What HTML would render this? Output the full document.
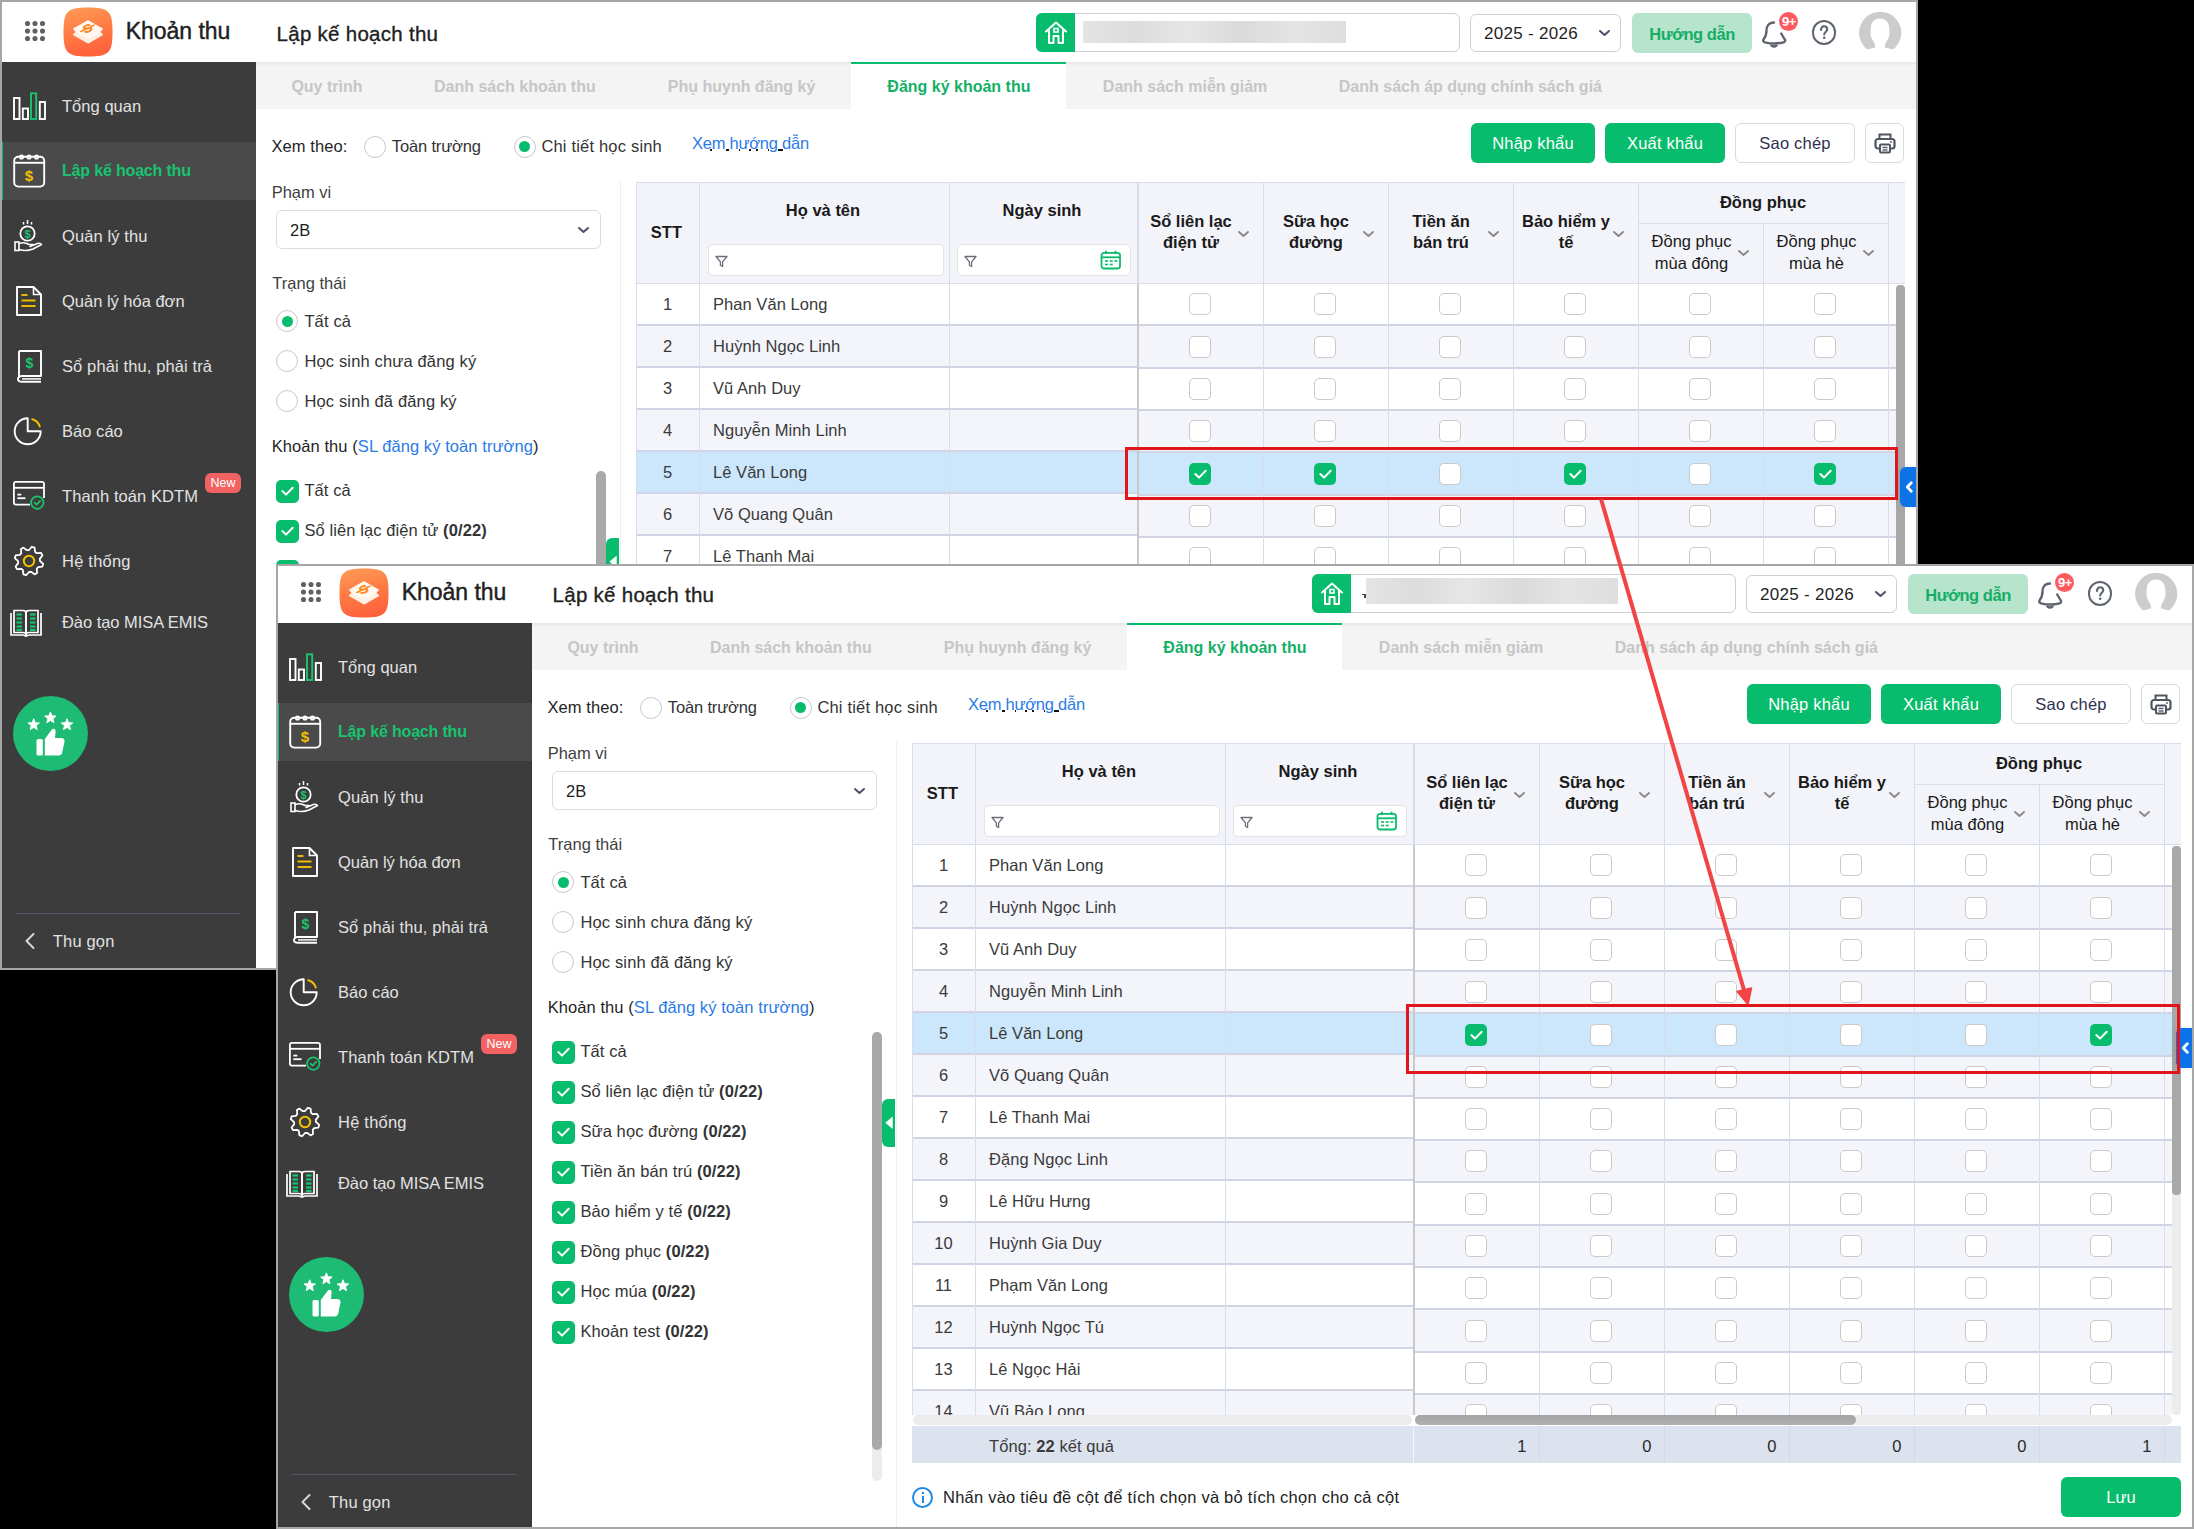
<!DOCTYPE html><html><head><meta charset="utf-8"><style>
html,body{margin:0;padding:0;background:#000;}
body{width:2194px;height:1529px;position:relative;overflow:hidden;font-family:"Liberation Sans", sans-serif;}
.shot{position:absolute;border:2px solid #a6a6a6;box-sizing:border-box;overflow:hidden;background:#fff;}
b{font-weight:700;}
</style></head><body>
<div class="shot" style="left:0;top:0;width:1918px;height:970px;"><div style="position:absolute;left:-2px;top:-2px;"><div style="position:absolute;left:0;top:0;width:1920px;height:970px;background:#fff;"><div style="position:absolute;left:0px;top:0px;width:1916px;height:62px;background:#fff;"></div><svg style="position:absolute;left:20px;top:16px;overflow:visible" width="30" height="30" viewBox="0 0 30 30"><circle cx="7.5" cy="7.5" r="2.55" fill="#606060"/><circle cx="7.5" cy="15" r="2.55" fill="#606060"/><circle cx="7.5" cy="22.5" r="2.55" fill="#606060"/><circle cx="15" cy="7.5" r="2.55" fill="#606060"/><circle cx="15" cy="15" r="2.55" fill="#606060"/><circle cx="15" cy="22.5" r="2.55" fill="#606060"/><circle cx="22.5" cy="7.5" r="2.55" fill="#606060"/><circle cx="22.5" cy="15" r="2.55" fill="#606060"/><circle cx="22.5" cy="22.5" r="2.55" fill="#606060"/></svg><svg style="position:absolute;left:63px;top:7px;overflow:visible" width="50" height="50" viewBox="0 0 50 50">
      <defs><linearGradient id="lg" x1="0" y1="0" x2="0.25" y2="1"><stop offset="0" stop-color="#ff9d55"/><stop offset="0.55" stop-color="#ff7a45"/><stop offset="1" stop-color="#ff633c"/></linearGradient></defs>
      <path d="M0.5 25 C0.5 4 4 0.5 25 0.5 C46 0.5 49.5 4 49.5 25 C49.5 46 46 49.5 25 49.5 C4 49.5 0.5 46 0.5 25 Z" fill="url(#lg)"/>
      <path d="M25 13.1 L40.2 21.7 L37.4 25.1 L40.2 27.8 L25.2 36.6 L9.8 27.8 L12.6 25.1 L9.8 21.7 Z" fill="#fff9f1"/>
      <path d="M12.6 25.1 L25.2 31.8 L37.4 25.1 L40.2 27.8 L25.2 36.6 L9.8 27.8 Z" fill="#fdeedf" opacity="0.8"/>
      <g transform="translate(24.5 21.3) rotate(-24) scale(1 0.8)">
        <line x1="-7.2" y1="0.3" x2="-3.8" y2="0.3" stroke="#ff8617" stroke-width="1.9" stroke-linecap="round"/>
        <line x1="3.8" y1="-0.3" x2="7.2" y2="-0.3" stroke="#ff8617" stroke-width="1.9" stroke-linecap="round"/>
        <text x="0" y="5" font-family="Liberation Sans" font-weight="700" font-size="13.5" fill="#ff8617" stroke="#ff8617" stroke-width="0.7" text-anchor="middle">S</text>
      </g></svg><div style="position:absolute;left:125.8px;top:19.53px;font-size:23px;line-height:23px;font-weight:400;color:#1f1f1f;white-space:nowrap;letter-spacing:-0.047px;-webkit-text-stroke:0.45px #1f1f1f;">Khoản thu</div><div style="position:absolute;left:276.6px;top:24.15px;font-size:20.5px;line-height:20.5px;font-weight:400;color:#1f1f1f;white-space:nowrap;letter-spacing:0.274px;-webkit-text-stroke:0.35px #1f1f1f;">Lập kế hoạch thu</div><div style="position:absolute;left:1036px;top:13px;width:424px;height:39px;border:1px solid #cfcfcf;border-radius:6px;box-sizing:border-box;background:#fff;"></div><div style="position:absolute;left:1036px;top:13px;width:39px;height:39px;background:#07bc6c;border-radius:6px 0 0 6px;"></div><svg style="position:absolute;left:1043px;top:19px;overflow:visible" width="26" height="26" viewBox="0 0 26 26"><path d="M3 12.5 L13 3.5 L23 12.5 M6 10 V24 H10.5 V17 H15.5 V24 H20 V10" fill="none" stroke="#fff" stroke-width="2" stroke-linejoin="round" stroke-linecap="round"/><rect x="11" y="9.5" width="4" height="3.5" fill="none" stroke="#fff" stroke-width="1.6"/></svg><div style="position:absolute;left:1083px;top:21px;width:263px;height:22px;background:linear-gradient(90deg,#e4e4e4,#dcdcdc 20%,#e6e6e6 40%,#dadada 60%,#e4e4e4 80%,#dedede);filter:blur(0.6px);"></div><div style="position:absolute;left:1470px;top:14px;width:151px;height:38px;border:1px solid #d0d0d0;border-radius:6px;box-sizing:border-box;background:#fff;"></div><div style="position:absolute;left:1484px;top:25.11px;font-size:17px;line-height:17px;font-weight:400;color:#1f1f1f;white-space:nowrap;letter-spacing:0.3px;">2025 - 2026</div><svg style="position:absolute;left:1598.5px;top:30.25px;overflow:visible" width="11" height="5.5" viewBox="0 0 11 5.5"><path d="M1 1 L5.5 5.0 L10 1" fill="none" stroke="#4f4f6b" stroke-width="2" stroke-linecap="round" stroke-linejoin="round"/></svg><div style="position:absolute;left:1632px;top:13px;width:120px;height:40px;background:#b6e4cc;border-radius:6px;"></div><div style="position:absolute;left:1632.0px;width:120px;text-align:center;top:25.53px;font-size:16.5px;line-height:16.5px;font-weight:700;color:#16ad66;white-space:nowrap;letter-spacing:-0.45px;">Hướng dẫn</div><svg style="position:absolute;left:1762px;top:20px;overflow:visible" width="26" height="28" viewBox="0 0 26 28"><path d="M12 2.5 C6.5 2.5 4.5 6.5 4.5 10.5 C4.5 14.5 3.8 16.5 1.5 19.5 C0.8 20.5 1.2 21.8 3 22.3 C9 23.8 16 23.8 21.5 22.3 C23.2 21.8 23.5 20.6 22.8 19.5 L19.2 13.5" fill="none" stroke="#5f6570" stroke-width="2.4" stroke-linecap="round" stroke-linejoin="round"/><path d="M9.5 25.5 Q12 27.5 14.5 25.5" fill="none" stroke="#5f6570" stroke-width="2.4" stroke-linecap="round"/></svg><div style="position:absolute;left:1778.8px;top:11.7px;width:19.200000000000045px;height:19.2px;background:#ff5a5f;border-radius:50%;"></div><div style="position:absolute;left:1774.0px;width:30px;text-align:center;top:14.80px;font-size:13px;line-height:13px;font-weight:700;color:#fff;white-space:nowrap;letter-spacing:-0.4px;">9+</div><div style="position:absolute;left:1811.5px;top:19.5px;width:24.799999999999955px;height:25.0px;border:2.4px solid #5f6570;border-radius:50%;box-sizing:border-box;"></div><svg style="position:absolute;left:1816px;top:24px;overflow:visible" width="16" height="16" viewBox="0 0 16 16"><path d="M5 6 C5 3.5 6.5 2.3 8 2.3 C9.8 2.3 11.2 3.6 11.2 5.4 C11.2 7.5 8.2 8 8.2 10.5" fill="none" stroke="#5d636e" stroke-width="2.1" stroke-linecap="round"/><circle cx="8.2" cy="13.8" r="1.3" fill="#5d636e"/></svg><svg style="position:absolute;left:1859px;top:11.5px;overflow:visible" width="42" height="43" viewBox="0 0 42 43"><circle cx="21.2" cy="20.8" r="21.1" fill="#cccccc"/><path d="M8 37.6 L16 35.5 C16.5 32 14.5 30 13 27 C11.3 23.5 11.2 20.5 11.8 15.5 C12.5 9.5 16 6.6 21 6.6 C26 6.6 29.5 9.5 30.2 15.5 C30.8 20.5 30.7 23.5 29 27 C27.5 30 25.5 32 26 35.5 L34 37.6 L34 44 L8 44 Z" fill="#fff"/></svg><div style="position:absolute;left:0px;top:62px;width:256px;height:906px;background:#3c3c3c;"></div><div style="position:absolute;left:0px;top:142px;width:256px;height:58px;background:#4a4a4a;"></div><div style="position:absolute;left:0px;top:142px;width:3px;height:58px;background:#07bc6c;"></div><svg style="position:absolute;left:12px;top:91px;overflow:visible" width="34" height="30" viewBox="0 0 34 30">
      <rect x="2" y="7" width="5.5" height="21" fill="none" stroke="#ffffff" stroke-width="1.9"/>
      <rect x="10.8" y="17.5" width="5.2" height="10.5" fill="none" stroke="#ffffff" stroke-width="1.9"/>
      <rect x="19" y="2.3" width="5.2" height="25.7" fill="none" stroke="#19c46e" stroke-width="1.9"/>
      <rect x="27.8" y="11" width="5.2" height="17" fill="none" stroke="#ffffff" stroke-width="1.9"/></svg><svg style="position:absolute;left:12px;top:153px;overflow:visible" width="34" height="36" viewBox="0 0 34 36">
      <rect x="2.2" y="3.8" width="30" height="29.8" rx="4" fill="none" stroke="#ffffff" stroke-width="1.9"/>
      <line x1="2.2" y1="9.8" x2="32.2" y2="9.8" stroke="#ffffff" stroke-width="1.9"/>
      <circle cx="9.5" cy="4" r="1.8" fill="none" stroke="#ffffff" stroke-width="1.5"/>
      <circle cx="17" cy="4" r="1.8" fill="none" stroke="#ffffff" stroke-width="1.5"/>
      <circle cx="24.5" cy="4" r="1.8" fill="none" stroke="#ffffff" stroke-width="1.5"/>
      <text x="17" y="27.5" font-family="Liberation Sans" font-weight="700" font-size="15" fill="#f5c000" text-anchor="middle">$</text></svg><svg style="position:absolute;left:13px;top:219px;overflow:visible" width="32" height="34" viewBox="0 0 32 34">
      <circle cx="14.5" cy="14.5" r="7.2" fill="none" stroke="#ffffff" stroke-width="1.8"/>
      <text x="14.5" y="18.8" font-family="Liberation Sans" font-weight="700" font-size="11" fill="#19c46e" text-anchor="middle">$</text>
      <line x1="14.5" y1="1" x2="14.5" y2="5" stroke="#ffffff" stroke-width="1.5"/>
      <line x1="10.5" y1="3" x2="10.5" y2="5.5" stroke="#ffffff" stroke-width="1.5"/>
      <line x1="18.5" y1="3" x2="18.5" y2="5.5" stroke="#ffffff" stroke-width="1.5"/>
      <rect x="2" y="23" width="4" height="8.5" fill="none" stroke="#ffffff" stroke-width="1.6"/>
      <path d="M6 24.5 C10 23 13 23.5 16 25.5 L20 25.5 M6 30.5 C11 32 15 32 20 30 L28.5 25.5 C27.5 24 25 24 22 25.5 L17 27.5" fill="none" stroke="#ffffff" stroke-width="1.6" stroke-linejoin="round" stroke-linecap="round"/></svg><svg style="position:absolute;left:15px;top:285px;overflow:visible" width="28" height="32" viewBox="0 0 28 32">
      <path d="M2 2 H18.5 L26 9.5 V30 H2 Z" fill="none" stroke="#ffffff" stroke-width="1.9" stroke-linejoin="round"/>
      <path d="M18.5 2 V9.5 H26" fill="none" stroke="#ffffff" stroke-width="1.6"/>
      <line x1="6.5" y1="10" x2="12.5" y2="10" stroke="#f5c000" stroke-width="1.9"/>
      <line x1="6.5" y1="15.5" x2="20.5" y2="15.5" stroke="#f5c000" stroke-width="1.9"/>
      <line x1="6.5" y1="21" x2="20.5" y2="21" stroke="#f5c000" stroke-width="1.9"/></svg><svg style="position:absolute;left:15px;top:349px;overflow:visible" width="28" height="35" viewBox="0 0 28 35">
      <path d="M4 2 H26 V27 H7 C4.5 27 3 28.5 3 30 C3 31.8 4.5 32.8 7 32.8 H26" fill="none" stroke="#ffffff" stroke-width="1.9" stroke-linejoin="round"/>
      <path d="M4 2 V29" fill="none" stroke="#ffffff" stroke-width="1.9"/>
      <line x1="7" y1="29.9" x2="26" y2="29.9" stroke="#ffffff" stroke-width="1.5"/>
      <text x="14.5" y="18.5" font-family="Liberation Sans" font-weight="700" font-size="14" fill="#19c46e" text-anchor="middle">$</text></svg><svg style="position:absolute;left:14px;top:416px;overflow:visible" width="30" height="30" viewBox="0 0 30 30">
      <path d="M13.7 2.3 A13 13 0 1 0 26.7 15.3 H13.7 Z" fill="none" stroke="#ffffff" stroke-width="1.9" stroke-linejoin="round"/>
      <path d="M17.5 3 A11.5 11.5 0 0 1 26 11.3" fill="none" stroke="#f5c000" stroke-width="1.9"/></svg><svg style="position:absolute;left:13px;top:481px;overflow:visible" width="33" height="30" viewBox="0 0 33 30">
      <path d="M31 17 V3 C31 1.6 30.2 0.9 28.8 0.9 H3 C1.6 0.9 0.9 1.6 0.9 3 V21.5 C0.9 22.9 1.6 23.6 3 23.6 H17" fill="none" stroke="#ffffff" stroke-width="1.8"/>
      <line x1="0.9" y1="6.8" x2="31" y2="6.8" stroke="#ffffff" stroke-width="1.8"/>
      <line x1="4.3" y1="13.6" x2="8.3" y2="13.6" stroke="#ffffff" stroke-width="1.8"/>
      <line x1="4.3" y1="17.2" x2="12.5" y2="17.2" stroke="#ffffff" stroke-width="1.8"/>
      <circle cx="24.3" cy="21.6" r="6.2" fill="#3c3c3c" stroke="#19c46e" stroke-width="1.8"/>
      <path d="M21.6 21.6 L23.6 23.6 L27.1 19.9" fill="none" stroke="#19c46e" stroke-width="1.7" stroke-linecap="round" stroke-linejoin="round"/></svg><svg style="position:absolute;left:14px;top:546px;overflow:visible" width="30" height="30" viewBox="0 0 30 30">
      <path d="M15.00 0.50 L17.83 0.78 L19.21 4.84 L21.11 5.85 L25.25 4.75 L27.06 6.94 L25.16 10.79 L25.79 12.85 L29.50 15.00 L29.22 17.83 L25.16 19.21 L24.15 21.11 L25.25 25.25 L23.06 27.06 L19.21 25.16 L17.15 25.79 L15.00 29.50 L12.17 29.22 L10.79 25.16 L8.89 24.15 L4.75 25.25 L2.94 23.06 L4.84 19.21 L4.21 17.15 L0.50 15.00 L0.78 12.17 L4.84 10.79 L5.85 8.89 L4.75 4.75 L6.94 2.94 L10.79 4.84 L12.85 4.21 Z" fill="none" stroke="#ffffff" stroke-width="1.8" stroke-linejoin="round" transform="rotate(11.25 15 15)"/>
      <circle cx="15" cy="15" r="5.2" fill="none" stroke="#f5c000" stroke-width="2"/></svg><svg style="position:absolute;left:9px;top:609px;overflow:visible" width="34" height="29" viewBox="0 0 34 29">
      <path d="M2 4 V26 H14 C15 26 16 27 17 27 C18 27 19 26 20 26 H32 V4" fill="none" stroke="#ffffff" stroke-width="1.7"/>
      <path d="M5 1.5 H14 C15.5 1.5 17 2.5 17 4 V25 C16 23.5 15 23.5 14 23.5 H5 Z" fill="none" stroke="#ffffff" stroke-width="1.7"/>
      <path d="M29 1.5 H20 C18.5 1.5 17 2.5 17 4 V25 C18 23.5 19 23.5 20 23.5 H29 Z" fill="none" stroke="#ffffff" stroke-width="1.7"/>
      <g stroke="#19c46e" stroke-width="2.2">
       <line x1="7.5" y1="5.5" x2="13" y2="5.5"/><line x1="7.5" y1="9.5" x2="13" y2="9.5"/><line x1="7.5" y1="13.5" x2="13" y2="13.5"/><line x1="7.5" y1="17.5" x2="13" y2="17.5"/><line x1="7.5" y1="21" x2="13" y2="21"/>
       <line x1="21" y1="5.5" x2="26.5" y2="5.5"/><line x1="21" y1="9.5" x2="26.5" y2="9.5"/><line x1="21" y1="13.5" x2="26.5" y2="13.5"/><line x1="21" y1="17.5" x2="26.5" y2="17.5"/><line x1="21" y1="21" x2="26.5" y2="21"/>
      </g></svg><div style="position:absolute;left:62px;top:98.03px;font-size:16.5px;line-height:16.5px;font-weight:400;color:#e2e2e2;white-space:nowrap;letter-spacing:0.037px;">Tổng quan</div><div style="position:absolute;left:62px;top:163.46px;font-size:16px;line-height:16px;font-weight:700;color:#17c46f;white-space:nowrap;letter-spacing:-0.172px;">Lập kế hoạch thu</div><div style="position:absolute;left:62px;top:228.03px;font-size:16.5px;line-height:16.5px;font-weight:400;color:#e2e2e2;white-space:nowrap;letter-spacing:0.111px;">Quản lý thu</div><div style="position:absolute;left:62px;top:293.03px;font-size:16.5px;line-height:16.5px;font-weight:400;color:#e2e2e2;white-space:nowrap;letter-spacing:-0.011px;">Quản lý hóa đơn</div><div style="position:absolute;left:62px;top:358.03px;font-size:16.5px;line-height:16.5px;font-weight:400;color:#e2e2e2;white-space:nowrap;letter-spacing:0.116px;">Sổ phải thu, phải trả</div><div style="position:absolute;left:62px;top:423.03px;font-size:16.5px;line-height:16.5px;font-weight:400;color:#e2e2e2;white-space:nowrap;letter-spacing:0.042px;">Báo cáo</div><div style="position:absolute;left:62px;top:488.03px;font-size:16.5px;line-height:16.5px;font-weight:400;color:#e2e2e2;white-space:nowrap;letter-spacing:0.085px;">Thanh toán KDTM</div><div style="position:absolute;left:62px;top:553.03px;font-size:16.5px;line-height:16.5px;font-weight:400;color:#e2e2e2;white-space:nowrap;letter-spacing:0.219px;">Hệ thống</div><div style="position:absolute;left:62px;top:614.03px;font-size:16.5px;line-height:16.5px;font-weight:400;color:#e2e2e2;white-space:nowrap;letter-spacing:-0.046px;">Đào tạo MISA EMIS</div><div style="position:absolute;left:205px;top:473px;width:36px;height:20px;background:#f26262;border-radius:6px;"></div><div style="position:absolute;left:205.0px;width:36px;text-align:center;top:477.42px;font-size:12.5px;line-height:12.5px;font-weight:400;color:#fff;white-space:nowrap;letter-spacing:0px;">New</div><div style="position:absolute;left:13px;top:696px;width:75px;height:75px;background:#1dbb73;border-radius:50%;"></div><svg style="position:absolute;left:13.5px;top:696.5px;overflow:visible" width="74" height="74" viewBox="0 0 74 74"><polygon points="19.70,21.80 21.23,25.70 25.41,25.95 22.17,28.60 23.23,32.65 19.70,30.40 16.17,32.65 17.23,28.60 13.99,25.95 18.17,25.70" fill="#fff" stroke="#fff" stroke-width="1" stroke-linejoin="round"/><polygon points="36.40,14.90 37.93,18.80 42.11,19.05 38.87,21.70 39.93,25.75 36.40,23.50 32.87,25.75 33.93,21.70 30.69,19.05 34.87,18.80" fill="#fff" stroke="#fff" stroke-width="1" stroke-linejoin="round"/><polygon points="53.00,21.80 54.53,25.70 58.71,25.95 55.47,28.60 56.53,32.65 53.00,30.40 49.47,32.65 50.53,28.60 47.29,25.95 51.47,25.70" fill="#fff" stroke="#fff" stroke-width="1" stroke-linejoin="round"/><rect x="22.5" y="42" width="6.3" height="16.5" rx="1.5" fill="#fff"/><path d="M30.8 42 L37.5 33 C38.8 31 41.8 31.5 41.6 34.5 L41 41 H47.5 C49.6 41 51 42.8 50.5 44.8 L48.2 55.5 C47.8 57.4 46.5 58.5 44.6 58.5 H30.8 Z" fill="#fff"/></svg><div style="position:absolute;left:14.7px;top:913px;width:226.8px;height:1px;background:#4d5566;"></div><svg style="position:absolute;left:24px;top:932px;overflow:visible" width="12" height="18" viewBox="0 0 12 18"><path d="M9.5 2 L2.5 9 L9.5 16" fill="none" stroke="#d8d8d8" stroke-width="2" stroke-linecap="round" stroke-linejoin="round"/></svg><div style="position:absolute;left:52.8px;top:932.73px;font-size:16.5px;line-height:16.5px;font-weight:400;color:#e2e2e2;white-space:nowrap;letter-spacing:0.176px;">Thu gọn</div><div style="position:absolute;left:256px;top:62px;width:1660px;height:47px;background:#f4f4f4;"></div><div style="position:absolute;left:256px;top:62px;width:1660px;height:4px;background:linear-gradient(#e6e6e6,#f4f4f4);"></div><div style="position:absolute;left:851px;top:62px;width:215px;height:47px;background:#fff;border-top:2px solid #07bc6c;box-sizing:border-box;"></div><div style="position:absolute;left:126.94999999999999px;width:400px;text-align:center;top:78.66px;font-size:16px;line-height:16px;font-weight:700;color:#c6c6c6;white-space:nowrap;letter-spacing:0px;">Quy trình</div><div style="position:absolute;left:314.85px;width:400px;text-align:center;top:78.66px;font-size:16px;line-height:16px;font-weight:700;color:#c6c6c6;white-space:nowrap;letter-spacing:0px;">Danh sách khoản thu</div><div style="position:absolute;left:541.55px;width:400px;text-align:center;top:78.66px;font-size:16px;line-height:16px;font-weight:700;color:#c6c6c6;white-space:nowrap;letter-spacing:0px;">Phụ huynh đăng ký</div><div style="position:absolute;left:758.9px;width:400px;text-align:center;top:78.66px;font-size:16px;line-height:16px;font-weight:700;color:#14b066;white-space:nowrap;letter-spacing:0px;">Đăng ký khoản thu</div><div style="position:absolute;left:985.0999999999999px;width:400px;text-align:center;top:78.66px;font-size:16px;line-height:16px;font-weight:700;color:#c6c6c6;white-space:nowrap;letter-spacing:0px;">Danh sách miễn giảm</div><div style="position:absolute;left:1270.4px;width:400px;text-align:center;top:78.66px;font-size:16px;line-height:16px;font-weight:700;color:#c6c6c6;white-space:nowrap;letter-spacing:0px;">Danh sách áp dụng chính sách giá</div><div style="position:absolute;left:271.4px;top:138.03px;font-size:16.5px;line-height:16.5px;font-weight:400;color:#1f1f1f;white-space:nowrap;letter-spacing:0.098px;">Xem theo:</div><div style="position:absolute;left:363.5px;top:135.5px;width:22.0px;height:22.0px;border:1.5px solid #c8c8c8;border-radius:50%;box-sizing:border-box;background:#fff;"></div><div style="position:absolute;left:391.8px;top:138.03px;font-size:16.5px;line-height:16.5px;font-weight:400;color:#333;white-space:nowrap;letter-spacing:-0.147px;">Toàn trường</div><div style="position:absolute;left:513.5px;top:135.5px;width:22.0px;height:22.0px;border:1.5px solid #c8c8c8;border-radius:50%;box-sizing:border-box;background:#fff;"></div><div style="position:absolute;left:519.0px;top:141.0px;width:11.0px;height:11.0px;background:#07bc6c;border-radius:50%;"></div><div style="position:absolute;left:541.4px;top:138.03px;font-size:16.5px;line-height:16.5px;font-weight:400;color:#333;white-space:nowrap;letter-spacing:0.187px;">Chi tiết học sinh</div><div style="position:absolute;left:692px;top:134.73px;font-size:16.5px;line-height:16.5px;font-weight:400;color:#2b7be6;white-space:nowrap;letter-spacing:-0.244px;">Xem hướng dẫn</div><div style="position:absolute;left:710px;top:149.2px;width:1.5px;height:1.6000000000000227px;background:#111;"></div><div style="position:absolute;left:725.9px;top:149.2px;width:3.2000000000000455px;height:1.6000000000000227px;background:#111;"></div><div style="position:absolute;left:738.7px;top:149.2px;width:1.5px;height:1.6000000000000227px;background:#111;"></div><div style="position:absolute;left:749px;top:149.2px;width:1.5px;height:1.6000000000000227px;background:#111;"></div><div style="position:absolute;left:755.8px;top:149.2px;width:2.2000000000000455px;height:1.6000000000000227px;background:#111;"></div><div style="position:absolute;left:767.7px;top:149.2px;width:1.5px;height:1.6000000000000227px;background:#111;"></div><div style="position:absolute;left:778px;top:149.2px;width:5px;height:1.6000000000000227px;background:#111;"></div><div style="position:absolute;left:1471px;top:123px;width:123.70000000000005px;height:39.69999999999999px;background:#07bc6c;border-radius:6px;"></div><div style="position:absolute;left:1471.0px;width:124px;text-align:center;top:135.03px;font-size:16.5px;line-height:16.5px;font-weight:400;color:#fff;white-space:nowrap;letter-spacing:0.2px;">Nhập khẩu</div><div style="position:absolute;left:1605px;top:123px;width:119.70000000000005px;height:39.69999999999999px;background:#07bc6c;border-radius:6px;"></div><div style="position:absolute;left:1603.0px;width:124px;text-align:center;top:135.03px;font-size:16.5px;line-height:16.5px;font-weight:400;color:#fff;white-space:nowrap;letter-spacing:0.2px;">Xuất khẩu</div><div style="position:absolute;left:1735.2px;top:123px;width:119.39999999999986px;height:39.69999999999999px;background:#fff;border:1px solid #dadada;border-radius:6px;box-sizing:border-box;"></div><div style="position:absolute;left:1733.0px;width:124px;text-align:center;top:135.03px;font-size:16.5px;line-height:16.5px;font-weight:400;color:#2f2f4f;white-space:nowrap;letter-spacing:0.2px;">Sao chép</div><div style="position:absolute;left:1864.8px;top:123px;width:39.700000000000045px;height:39.69999999999999px;background:#fff;border:1px solid #dadada;border-radius:6px;box-sizing:border-box;"></div><svg style="position:absolute;left:1873px;top:131px;overflow:visible" width="24" height="24" viewBox="0 0 24 24"><path d="M6.5 8 V3.5 H17.5 V8" fill="none" stroke="#505562" stroke-width="2"/><rect x="2.5" y="8" width="19" height="9.5" rx="2.5" fill="none" stroke="#505562" stroke-width="2.2"/><rect x="7" y="13.5" width="10" height="8" rx="1" fill="#fff" stroke="#505562" stroke-width="2"/><line x1="9.5" y1="16.5" x2="14.5" y2="16.5" stroke="#505562" stroke-width="1.4"/><line x1="9.5" y1="19" x2="14.5" y2="19" stroke="#505562" stroke-width="1.4"/><circle cx="18" cy="11" r="0.9" fill="#505562"/></svg><div style="position:absolute;left:271.7px;top:184.03px;font-size:16.5px;line-height:16.5px;font-weight:400;color:#3f3f3f;white-space:nowrap;letter-spacing:-0.035px;">Phạm vi</div><div style="position:absolute;left:276.4px;top:210px;width:324.4px;height:38.5px;background:#fff;border:1px solid #dcdcdc;border-radius:6px;box-sizing:border-box;"></div><div style="position:absolute;left:290px;top:221.53px;font-size:16.5px;line-height:16.5px;font-weight:400;color:#1f1f1f;white-space:nowrap;letter-spacing:0px;">2B</div><svg style="position:absolute;left:577.5px;top:226.75px;overflow:visible" width="11" height="5.5" viewBox="0 0 11 5.5"><path d="M1 1 L5.5 5.0 L10 1" fill="none" stroke="#4f4f6b" stroke-width="2" stroke-linecap="round" stroke-linejoin="round"/></svg><div style="position:absolute;left:272.2px;top:275.03px;font-size:16.5px;line-height:16.5px;font-weight:400;color:#3f3f3f;white-space:nowrap;letter-spacing:0.035px;">Trạng thái</div><div style="position:absolute;left:276.4px;top:310.2px;width:22.0px;height:22.0px;border:1.5px solid #c8c8c8;border-radius:50%;box-sizing:border-box;background:#fff;"></div><div style="position:absolute;left:281.9px;top:315.7px;width:11.0px;height:11.0px;background:#07bc6c;border-radius:50%;"></div><div style="position:absolute;left:304.4px;top:313.23px;font-size:16.5px;line-height:16.5px;font-weight:400;color:#333;white-space:nowrap;letter-spacing:0.15px;">Tất cả</div><div style="position:absolute;left:276.4px;top:350.2px;width:22.0px;height:22.0px;border:1.5px solid #c8c8c8;border-radius:50%;box-sizing:border-box;background:#fff;"></div><div style="position:absolute;left:304.4px;top:353.23px;font-size:16.5px;line-height:16.5px;font-weight:400;color:#333;white-space:nowrap;letter-spacing:0.15px;">Học sinh chưa đăng ký</div><div style="position:absolute;left:276.4px;top:390.2px;width:22.0px;height:22.0px;border:1.5px solid #c8c8c8;border-radius:50%;box-sizing:border-box;background:#fff;"></div><div style="position:absolute;left:304.4px;top:393.23px;font-size:16.5px;line-height:16.5px;font-weight:400;color:#333;white-space:nowrap;letter-spacing:0.15px;">Học sinh đã đăng ký</div><div style="position:absolute;left:271.7px;top:438.03px;font-size:16.5px;line-height:16.5px;font-weight:400;color:#1f1f1f;white-space:nowrap;letter-spacing:0.074px;">Khoản thu (<span style="color:#2b7be6">SL đăng ký toàn trường</span>)</div><div style="position:absolute;left:276.0px;top:480.0px;width:23.0px;height:23.0px;background:#07bc6c;border-radius:5px;"></div><svg style="position:absolute;left:276.0px;top:480.0px;overflow:visible" width="23" height="23" viewBox="0 0 23 23"><path d="M6.3 11.1 L10 14.6 L16.7 7.8" fill="none" stroke="#fff" stroke-width="2" stroke-linecap="round" stroke-linejoin="round"/></svg><div style="position:absolute;left:304.4px;top:482.13px;font-size:16.5px;line-height:16.5px;font-weight:400;color:#333;white-space:nowrap;letter-spacing:0.1px;">Tất cả</div><div style="position:absolute;left:276.0px;top:520.0px;width:23.0px;height:23.0px;background:#07bc6c;border-radius:5px;"></div><svg style="position:absolute;left:276.0px;top:520.0px;overflow:visible" width="23" height="23" viewBox="0 0 23 23"><path d="M6.3 11.1 L10 14.6 L16.7 7.8" fill="none" stroke="#fff" stroke-width="2" stroke-linecap="round" stroke-linejoin="round"/></svg><div style="position:absolute;left:304.4px;top:522.13px;font-size:16.5px;line-height:16.5px;font-weight:400;color:#333;white-space:nowrap;letter-spacing:0.1px;">Sổ liên lạc điện tử <b>(0/22)</b></div><div style="position:absolute;left:276.0px;top:560.0px;width:23.0px;height:23.0px;background:#07bc6c;border-radius:5px;"></div><svg style="position:absolute;left:276.0px;top:560.0px;overflow:visible" width="23" height="23" viewBox="0 0 23 23"><path d="M6.3 11.1 L10 14.6 L16.7 7.8" fill="none" stroke="#fff" stroke-width="2" stroke-linecap="round" stroke-linejoin="round"/></svg><div style="position:absolute;left:304.4px;top:562.13px;font-size:16.5px;line-height:16.5px;font-weight:400;color:#333;white-space:nowrap;letter-spacing:0.1px;">Sữa học đường <b>(0/22)</b></div><div style="position:absolute;left:276.0px;top:600.0px;width:23.0px;height:23.0px;background:#07bc6c;border-radius:5px;"></div><svg style="position:absolute;left:276.0px;top:600.0px;overflow:visible" width="23" height="23" viewBox="0 0 23 23"><path d="M6.3 11.1 L10 14.6 L16.7 7.8" fill="none" stroke="#fff" stroke-width="2" stroke-linecap="round" stroke-linejoin="round"/></svg><div style="position:absolute;left:304.4px;top:602.13px;font-size:16.5px;line-height:16.5px;font-weight:400;color:#333;white-space:nowrap;letter-spacing:0.1px;">Tiền ăn bán trú <b>(0/22)</b></div><div style="position:absolute;left:276.0px;top:640.0px;width:23.0px;height:23.0px;background:#07bc6c;border-radius:5px;"></div><svg style="position:absolute;left:276.0px;top:640.0px;overflow:visible" width="23" height="23" viewBox="0 0 23 23"><path d="M6.3 11.1 L10 14.6 L16.7 7.8" fill="none" stroke="#fff" stroke-width="2" stroke-linecap="round" stroke-linejoin="round"/></svg><div style="position:absolute;left:304.4px;top:642.13px;font-size:16.5px;line-height:16.5px;font-weight:400;color:#333;white-space:nowrap;letter-spacing:0.1px;">Bảo hiểm y tế <b>(0/22)</b></div><div style="position:absolute;left:276.0px;top:680.0px;width:23.0px;height:23.0px;background:#07bc6c;border-radius:5px;"></div><svg style="position:absolute;left:276.0px;top:680.0px;overflow:visible" width="23" height="23" viewBox="0 0 23 23"><path d="M6.3 11.1 L10 14.6 L16.7 7.8" fill="none" stroke="#fff" stroke-width="2" stroke-linecap="round" stroke-linejoin="round"/></svg><div style="position:absolute;left:304.4px;top:682.13px;font-size:16.5px;line-height:16.5px;font-weight:400;color:#333;white-space:nowrap;letter-spacing:0.1px;">Đồng phục <b>(0/22)</b></div><div style="position:absolute;left:276.0px;top:720.0px;width:23.0px;height:23.0px;background:#07bc6c;border-radius:5px;"></div><svg style="position:absolute;left:276.0px;top:720.0px;overflow:visible" width="23" height="23" viewBox="0 0 23 23"><path d="M6.3 11.1 L10 14.6 L16.7 7.8" fill="none" stroke="#fff" stroke-width="2" stroke-linecap="round" stroke-linejoin="round"/></svg><div style="position:absolute;left:304.4px;top:722.13px;font-size:16.5px;line-height:16.5px;font-weight:400;color:#333;white-space:nowrap;letter-spacing:0.1px;">Học múa <b>(0/22)</b></div><div style="position:absolute;left:276.0px;top:760.0px;width:23.0px;height:23.0px;background:#07bc6c;border-radius:5px;"></div><svg style="position:absolute;left:276.0px;top:760.0px;overflow:visible" width="23" height="23" viewBox="0 0 23 23"><path d="M6.3 11.1 L10 14.6 L16.7 7.8" fill="none" stroke="#fff" stroke-width="2" stroke-linecap="round" stroke-linejoin="round"/></svg><div style="position:absolute;left:304.4px;top:762.13px;font-size:16.5px;line-height:16.5px;font-weight:400;color:#333;white-space:nowrap;letter-spacing:0.1px;">Khoản test <b>(0/22)</b></div><div style="position:absolute;left:596px;top:470.5px;width:10px;height:449.5px;background:#ececec;border-radius:5px;"></div><div style="position:absolute;left:596px;top:470.5px;width:10px;height:418.20000000000005px;background:#a9a9a9;border-radius:5px;"></div><div style="position:absolute;left:606px;top:538px;width:13px;height:48px;background:#07bc6c;border-radius:6px 0 0 6px;"></div><svg style="position:absolute;left:606px;top:538px;overflow:visible" width="14" height="48" viewBox="0 0 14 48"><path d="M10.7 17.6 L3.3 23.8 L10.7 30 Z" fill="#fff"/></svg><div style="position:absolute;left:620px;top:181px;width:1px;height:787px;background:#eceef4;"></div><div style="position:absolute;left:0;top:0;width:1916px;height:854px;overflow:hidden"><div style="position:absolute;left:636.4px;top:283px;width:500.6px;height:43px;background:#ffffff;"></div><div style="position:absolute;left:636.4px;top:325px;width:500.6px;height:43px;background:#f4f5fa;"></div><div style="position:absolute;left:636.4px;top:367px;width:500.6px;height:43px;background:#ffffff;"></div><div style="position:absolute;left:636.4px;top:409px;width:500.6px;height:43px;background:#f4f5fa;"></div><div style="position:absolute;left:636.4px;top:451px;width:500.6px;height:43px;background:#cce7fb;"></div><div style="position:absolute;left:636.4px;top:493px;width:500.6px;height:43px;background:#f4f5fa;"></div><div style="position:absolute;left:636.4px;top:535px;width:500.6px;height:43px;background:#ffffff;"></div><div style="position:absolute;left:636.4px;top:577px;width:500.6px;height:43px;background:#f4f5fa;"></div><div style="position:absolute;left:636.4px;top:619px;width:500.6px;height:43px;background:#ffffff;"></div><div style="position:absolute;left:636.4px;top:661px;width:500.6px;height:43px;background:#f4f5fa;"></div><div style="position:absolute;left:636.4px;top:703px;width:500.6px;height:43px;background:#ffffff;"></div><div style="position:absolute;left:636.4px;top:745px;width:500.6px;height:43px;background:#f4f5fa;"></div><div style="position:absolute;left:636.4px;top:787px;width:500.6px;height:43px;background:#ffffff;"></div><div style="position:absolute;left:636.4px;top:829px;width:500.6px;height:43px;background:#f4f5fa;"></div><div style="position:absolute;left:1139px;top:283px;width:757px;height:43px;background:#ffffff;"></div><div style="position:absolute;left:1139px;top:325px;width:757px;height:44px;background:#f4f5fa;"></div><div style="position:absolute;left:1139px;top:368px;width:757px;height:43px;background:#ffffff;"></div><div style="position:absolute;left:1139px;top:410px;width:757px;height:43px;background:#f4f5fa;"></div><div style="position:absolute;left:1139px;top:452px;width:757px;height:44px;background:#cce7fb;"></div><div style="position:absolute;left:1139px;top:495px;width:757px;height:43px;background:#f4f5fa;"></div><div style="position:absolute;left:1139px;top:537px;width:757px;height:43px;background:#ffffff;"></div><div style="position:absolute;left:1139px;top:579px;width:757px;height:43px;background:#f4f5fa;"></div><div style="position:absolute;left:1139px;top:621px;width:757px;height:44px;background:#ffffff;"></div><div style="position:absolute;left:1139px;top:664px;width:757px;height:43px;background:#f4f5fa;"></div><div style="position:absolute;left:1139px;top:706px;width:757px;height:43px;background:#ffffff;"></div><div style="position:absolute;left:1139px;top:748px;width:757px;height:44px;background:#f4f5fa;"></div><div style="position:absolute;left:1139px;top:791px;width:757px;height:43px;background:#ffffff;"></div><div style="position:absolute;left:1139px;top:833px;width:757px;height:43px;background:#f4f5fa;"></div><div style="position:absolute;left:636.4px;top:324px;width:500.6px;height:2px;background:#d0d4e4;"></div><div style="position:absolute;left:637.5px;width:60px;text-align:center;top:295.53px;font-size:16.5px;line-height:16.5px;font-weight:400;color:#3a3a3a;white-space:nowrap;letter-spacing:0px;">1</div><div style="position:absolute;left:713px;top:295.53px;font-size:16.5px;line-height:16.5px;font-weight:400;color:#3a3a3a;white-space:nowrap;letter-spacing:0.05px;">Phan Văn Long</div><div style="position:absolute;left:636.4px;top:366px;width:500.6px;height:2px;background:#d0d4e4;"></div><div style="position:absolute;left:637.5px;width:60px;text-align:center;top:337.53px;font-size:16.5px;line-height:16.5px;font-weight:400;color:#3a3a3a;white-space:nowrap;letter-spacing:0px;">2</div><div style="position:absolute;left:713px;top:337.53px;font-size:16.5px;line-height:16.5px;font-weight:400;color:#3a3a3a;white-space:nowrap;letter-spacing:0.05px;">Huỳnh Ngọc Linh</div><div style="position:absolute;left:636.4px;top:408px;width:500.6px;height:2px;background:#d0d4e4;"></div><div style="position:absolute;left:637.5px;width:60px;text-align:center;top:379.53px;font-size:16.5px;line-height:16.5px;font-weight:400;color:#3a3a3a;white-space:nowrap;letter-spacing:0px;">3</div><div style="position:absolute;left:713px;top:379.53px;font-size:16.5px;line-height:16.5px;font-weight:400;color:#3a3a3a;white-space:nowrap;letter-spacing:0.05px;">Vũ Anh Duy</div><div style="position:absolute;left:636.4px;top:450px;width:500.6px;height:2px;background:#d0d4e4;"></div><div style="position:absolute;left:637.5px;width:60px;text-align:center;top:421.53px;font-size:16.5px;line-height:16.5px;font-weight:400;color:#3a3a3a;white-space:nowrap;letter-spacing:0px;">4</div><div style="position:absolute;left:713px;top:421.53px;font-size:16.5px;line-height:16.5px;font-weight:400;color:#3a3a3a;white-space:nowrap;letter-spacing:0.05px;">Nguyễn Minh Linh</div><div style="position:absolute;left:636.4px;top:492px;width:500.6px;height:2px;background:#d0d4e4;"></div><div style="position:absolute;left:637.5px;width:60px;text-align:center;top:463.53px;font-size:16.5px;line-height:16.5px;font-weight:400;color:#3a3a3a;white-space:nowrap;letter-spacing:0px;">5</div><div style="position:absolute;left:713px;top:463.53px;font-size:16.5px;line-height:16.5px;font-weight:400;color:#3a3a3a;white-space:nowrap;letter-spacing:0.05px;">Lê Văn Long</div><div style="position:absolute;left:636.4px;top:534px;width:500.6px;height:2px;background:#d0d4e4;"></div><div style="position:absolute;left:637.5px;width:60px;text-align:center;top:505.53px;font-size:16.5px;line-height:16.5px;font-weight:400;color:#3a3a3a;white-space:nowrap;letter-spacing:0px;">6</div><div style="position:absolute;left:713px;top:505.53px;font-size:16.5px;line-height:16.5px;font-weight:400;color:#3a3a3a;white-space:nowrap;letter-spacing:0.05px;">Võ Quang Quân</div><div style="position:absolute;left:636.4px;top:576px;width:500.6px;height:2px;background:#d0d4e4;"></div><div style="position:absolute;left:637.5px;width:60px;text-align:center;top:547.53px;font-size:16.5px;line-height:16.5px;font-weight:400;color:#3a3a3a;white-space:nowrap;letter-spacing:0px;">7</div><div style="position:absolute;left:713px;top:547.53px;font-size:16.5px;line-height:16.5px;font-weight:400;color:#3a3a3a;white-space:nowrap;letter-spacing:0.05px;">Lê Thanh Mai</div><div style="position:absolute;left:636.4px;top:618px;width:500.6px;height:2px;background:#d0d4e4;"></div><div style="position:absolute;left:637.5px;width:60px;text-align:center;top:589.53px;font-size:16.5px;line-height:16.5px;font-weight:400;color:#3a3a3a;white-space:nowrap;letter-spacing:0px;">8</div><div style="position:absolute;left:713px;top:589.53px;font-size:16.5px;line-height:16.5px;font-weight:400;color:#3a3a3a;white-space:nowrap;letter-spacing:0.05px;">Đặng Ngọc Linh</div><div style="position:absolute;left:636.4px;top:660px;width:500.6px;height:2px;background:#d0d4e4;"></div><div style="position:absolute;left:637.5px;width:60px;text-align:center;top:631.53px;font-size:16.5px;line-height:16.5px;font-weight:400;color:#3a3a3a;white-space:nowrap;letter-spacing:0px;">9</div><div style="position:absolute;left:713px;top:631.53px;font-size:16.5px;line-height:16.5px;font-weight:400;color:#3a3a3a;white-space:nowrap;letter-spacing:0.05px;">Lê Hữu Hưng</div><div style="position:absolute;left:636.4px;top:702px;width:500.6px;height:2px;background:#d0d4e4;"></div><div style="position:absolute;left:637.5px;width:60px;text-align:center;top:673.53px;font-size:16.5px;line-height:16.5px;font-weight:400;color:#3a3a3a;white-space:nowrap;letter-spacing:0px;">10</div><div style="position:absolute;left:713px;top:673.53px;font-size:16.5px;line-height:16.5px;font-weight:400;color:#3a3a3a;white-space:nowrap;letter-spacing:0.05px;">Huỳnh Gia Duy</div><div style="position:absolute;left:636.4px;top:744px;width:500.6px;height:2px;background:#d0d4e4;"></div><div style="position:absolute;left:637.5px;width:60px;text-align:center;top:715.53px;font-size:16.5px;line-height:16.5px;font-weight:400;color:#3a3a3a;white-space:nowrap;letter-spacing:0px;">11</div><div style="position:absolute;left:713px;top:715.53px;font-size:16.5px;line-height:16.5px;font-weight:400;color:#3a3a3a;white-space:nowrap;letter-spacing:0.05px;">Phạm Văn Long</div><div style="position:absolute;left:636.4px;top:786px;width:500.6px;height:2px;background:#d0d4e4;"></div><div style="position:absolute;left:637.5px;width:60px;text-align:center;top:757.53px;font-size:16.5px;line-height:16.5px;font-weight:400;color:#3a3a3a;white-space:nowrap;letter-spacing:0px;">12</div><div style="position:absolute;left:713px;top:757.53px;font-size:16.5px;line-height:16.5px;font-weight:400;color:#3a3a3a;white-space:nowrap;letter-spacing:0.05px;">Huỳnh Ngọc Tú</div><div style="position:absolute;left:636.4px;top:828px;width:500.6px;height:2px;background:#d0d4e4;"></div><div style="position:absolute;left:637.5px;width:60px;text-align:center;top:799.53px;font-size:16.5px;line-height:16.5px;font-weight:400;color:#3a3a3a;white-space:nowrap;letter-spacing:0px;">13</div><div style="position:absolute;left:713px;top:799.53px;font-size:16.5px;line-height:16.5px;font-weight:400;color:#3a3a3a;white-space:nowrap;letter-spacing:0.05px;">Lê Ngọc Hải</div><div style="position:absolute;left:636.4px;top:870px;width:500.6px;height:2px;background:#d0d4e4;"></div><div style="position:absolute;left:637.5px;width:60px;text-align:center;top:841.53px;font-size:16.5px;line-height:16.5px;font-weight:400;color:#3a3a3a;white-space:nowrap;letter-spacing:0px;">14</div><div style="position:absolute;left:713px;top:841.53px;font-size:16.5px;line-height:16.5px;font-weight:400;color:#3a3a3a;white-space:nowrap;letter-spacing:0.05px;">Vũ Bảo Long</div><div style="position:absolute;left:1139px;top:324px;width:757px;height:2px;background:#d0d4e4;"></div><div style="position:absolute;left:1189.0px;top:293.4px;width:22.0px;height:22.0px;background:#fff;border:1px solid #c9c9c9;border-radius:5px;box-sizing:border-box;"></div><div style="position:absolute;left:1314.0px;top:293.4px;width:22.0px;height:22.0px;background:#fff;border:1px solid #c9c9c9;border-radius:5px;box-sizing:border-box;"></div><div style="position:absolute;left:1439.0px;top:293.4px;width:22.0px;height:22.0px;background:#fff;border:1px solid #c9c9c9;border-radius:5px;box-sizing:border-box;"></div><div style="position:absolute;left:1564.0px;top:293.4px;width:22.0px;height:22.0px;background:#fff;border:1px solid #c9c9c9;border-radius:5px;box-sizing:border-box;"></div><div style="position:absolute;left:1689.0px;top:293.4px;width:22.0px;height:22.0px;background:#fff;border:1px solid #c9c9c9;border-radius:5px;box-sizing:border-box;"></div><div style="position:absolute;left:1814.0px;top:293.4px;width:22.0px;height:22.0px;background:#fff;border:1px solid #c9c9c9;border-radius:5px;box-sizing:border-box;"></div><div style="position:absolute;left:1139px;top:367px;width:757px;height:2px;background:#d0d4e4;"></div><div style="position:absolute;left:1189.0px;top:335.9px;width:22.0px;height:22.0px;background:#fff;border:1px solid #c9c9c9;border-radius:5px;box-sizing:border-box;"></div><div style="position:absolute;left:1314.0px;top:335.9px;width:22.0px;height:22.0px;background:#fff;border:1px solid #c9c9c9;border-radius:5px;box-sizing:border-box;"></div><div style="position:absolute;left:1439.0px;top:335.9px;width:22.0px;height:22.0px;background:#fff;border:1px solid #c9c9c9;border-radius:5px;box-sizing:border-box;"></div><div style="position:absolute;left:1564.0px;top:335.9px;width:22.0px;height:22.0px;background:#fff;border:1px solid #c9c9c9;border-radius:5px;box-sizing:border-box;"></div><div style="position:absolute;left:1689.0px;top:335.9px;width:22.0px;height:22.0px;background:#fff;border:1px solid #c9c9c9;border-radius:5px;box-sizing:border-box;"></div><div style="position:absolute;left:1814.0px;top:335.9px;width:22.0px;height:22.0px;background:#fff;border:1px solid #c9c9c9;border-radius:5px;box-sizing:border-box;"></div><div style="position:absolute;left:1139px;top:409px;width:757px;height:2px;background:#d0d4e4;"></div><div style="position:absolute;left:1189.0px;top:378.4px;width:22.0px;height:22.0px;background:#fff;border:1px solid #c9c9c9;border-radius:5px;box-sizing:border-box;"></div><div style="position:absolute;left:1314.0px;top:378.4px;width:22.0px;height:22.0px;background:#fff;border:1px solid #c9c9c9;border-radius:5px;box-sizing:border-box;"></div><div style="position:absolute;left:1439.0px;top:378.4px;width:22.0px;height:22.0px;background:#fff;border:1px solid #c9c9c9;border-radius:5px;box-sizing:border-box;"></div><div style="position:absolute;left:1564.0px;top:378.4px;width:22.0px;height:22.0px;background:#fff;border:1px solid #c9c9c9;border-radius:5px;box-sizing:border-box;"></div><div style="position:absolute;left:1689.0px;top:378.4px;width:22.0px;height:22.0px;background:#fff;border:1px solid #c9c9c9;border-radius:5px;box-sizing:border-box;"></div><div style="position:absolute;left:1814.0px;top:378.4px;width:22.0px;height:22.0px;background:#fff;border:1px solid #c9c9c9;border-radius:5px;box-sizing:border-box;"></div><div style="position:absolute;left:1139px;top:451px;width:757px;height:2px;background:#d0d4e4;"></div><div style="position:absolute;left:1189.0px;top:420.4px;width:22.0px;height:22.0px;background:#fff;border:1px solid #c9c9c9;border-radius:5px;box-sizing:border-box;"></div><div style="position:absolute;left:1314.0px;top:420.4px;width:22.0px;height:22.0px;background:#fff;border:1px solid #c9c9c9;border-radius:5px;box-sizing:border-box;"></div><div style="position:absolute;left:1439.0px;top:420.4px;width:22.0px;height:22.0px;background:#fff;border:1px solid #c9c9c9;border-radius:5px;box-sizing:border-box;"></div><div style="position:absolute;left:1564.0px;top:420.4px;width:22.0px;height:22.0px;background:#fff;border:1px solid #c9c9c9;border-radius:5px;box-sizing:border-box;"></div><div style="position:absolute;left:1689.0px;top:420.4px;width:22.0px;height:22.0px;background:#fff;border:1px solid #c9c9c9;border-radius:5px;box-sizing:border-box;"></div><div style="position:absolute;left:1814.0px;top:420.4px;width:22.0px;height:22.0px;background:#fff;border:1px solid #c9c9c9;border-radius:5px;box-sizing:border-box;"></div><div style="position:absolute;left:1139px;top:494px;width:757px;height:2px;background:#d0d4e4;"></div><div style="position:absolute;left:1189.0px;top:462.9px;width:22.0px;height:22.0px;background:#07bc6c;border-radius:5px;"></div><svg style="position:absolute;left:1189.0px;top:462.9px;overflow:visible" width="22" height="22" viewBox="0 0 22 22"><path d="M6.3 11.1 L10 14.6 L16.7 7.8" fill="none" stroke="#fff" stroke-width="2" stroke-linecap="round" stroke-linejoin="round"/></svg><div style="position:absolute;left:1314.0px;top:462.9px;width:22.0px;height:22.0px;background:#07bc6c;border-radius:5px;"></div><svg style="position:absolute;left:1314.0px;top:462.9px;overflow:visible" width="22" height="22" viewBox="0 0 22 22"><path d="M6.3 11.1 L10 14.6 L16.7 7.8" fill="none" stroke="#fff" stroke-width="2" stroke-linecap="round" stroke-linejoin="round"/></svg><div style="position:absolute;left:1439.0px;top:462.9px;width:22.0px;height:22.0px;background:#fff;border:1px solid #c9c9c9;border-radius:5px;box-sizing:border-box;"></div><div style="position:absolute;left:1564.0px;top:462.9px;width:22.0px;height:22.0px;background:#07bc6c;border-radius:5px;"></div><svg style="position:absolute;left:1564.0px;top:462.9px;overflow:visible" width="22" height="22" viewBox="0 0 22 22"><path d="M6.3 11.1 L10 14.6 L16.7 7.8" fill="none" stroke="#fff" stroke-width="2" stroke-linecap="round" stroke-linejoin="round"/></svg><div style="position:absolute;left:1689.0px;top:462.9px;width:22.0px;height:22.0px;background:#fff;border:1px solid #c9c9c9;border-radius:5px;box-sizing:border-box;"></div><div style="position:absolute;left:1814.0px;top:462.9px;width:22.0px;height:22.0px;background:#07bc6c;border-radius:5px;"></div><svg style="position:absolute;left:1814.0px;top:462.9px;overflow:visible" width="22" height="22" viewBox="0 0 22 22"><path d="M6.3 11.1 L10 14.6 L16.7 7.8" fill="none" stroke="#fff" stroke-width="2" stroke-linecap="round" stroke-linejoin="round"/></svg><div style="position:absolute;left:1139px;top:536px;width:757px;height:2px;background:#d0d4e4;"></div><div style="position:absolute;left:1189.0px;top:505.4px;width:22.0px;height:22.0px;background:#fff;border:1px solid #c9c9c9;border-radius:5px;box-sizing:border-box;"></div><div style="position:absolute;left:1314.0px;top:505.4px;width:22.0px;height:22.0px;background:#fff;border:1px solid #c9c9c9;border-radius:5px;box-sizing:border-box;"></div><div style="position:absolute;left:1439.0px;top:505.4px;width:22.0px;height:22.0px;background:#fff;border:1px solid #c9c9c9;border-radius:5px;box-sizing:border-box;"></div><div style="position:absolute;left:1564.0px;top:505.4px;width:22.0px;height:22.0px;background:#fff;border:1px solid #c9c9c9;border-radius:5px;box-sizing:border-box;"></div><div style="position:absolute;left:1689.0px;top:505.4px;width:22.0px;height:22.0px;background:#fff;border:1px solid #c9c9c9;border-radius:5px;box-sizing:border-box;"></div><div style="position:absolute;left:1814.0px;top:505.4px;width:22.0px;height:22.0px;background:#fff;border:1px solid #c9c9c9;border-radius:5px;box-sizing:border-box;"></div><div style="position:absolute;left:1139px;top:578px;width:757px;height:2px;background:#d0d4e4;"></div><div style="position:absolute;left:1189.0px;top:547.4px;width:22.0px;height:22.0px;background:#fff;border:1px solid #c9c9c9;border-radius:5px;box-sizing:border-box;"></div><div style="position:absolute;left:1314.0px;top:547.4px;width:22.0px;height:22.0px;background:#fff;border:1px solid #c9c9c9;border-radius:5px;box-sizing:border-box;"></div><div style="position:absolute;left:1439.0px;top:547.4px;width:22.0px;height:22.0px;background:#fff;border:1px solid #c9c9c9;border-radius:5px;box-sizing:border-box;"></div><div style="position:absolute;left:1564.0px;top:547.4px;width:22.0px;height:22.0px;background:#fff;border:1px solid #c9c9c9;border-radius:5px;box-sizing:border-box;"></div><div style="position:absolute;left:1689.0px;top:547.4px;width:22.0px;height:22.0px;background:#fff;border:1px solid #c9c9c9;border-radius:5px;box-sizing:border-box;"></div><div style="position:absolute;left:1814.0px;top:547.4px;width:22.0px;height:22.0px;background:#fff;border:1px solid #c9c9c9;border-radius:5px;box-sizing:border-box;"></div><div style="position:absolute;left:1139px;top:620px;width:757px;height:2px;background:#d0d4e4;"></div><div style="position:absolute;left:1189.0px;top:589.4px;width:22.0px;height:22.0px;background:#fff;border:1px solid #c9c9c9;border-radius:5px;box-sizing:border-box;"></div><div style="position:absolute;left:1314.0px;top:589.4px;width:22.0px;height:22.0px;background:#fff;border:1px solid #c9c9c9;border-radius:5px;box-sizing:border-box;"></div><div style="position:absolute;left:1439.0px;top:589.4px;width:22.0px;height:22.0px;background:#fff;border:1px solid #c9c9c9;border-radius:5px;box-sizing:border-box;"></div><div style="position:absolute;left:1564.0px;top:589.4px;width:22.0px;height:22.0px;background:#fff;border:1px solid #c9c9c9;border-radius:5px;box-sizing:border-box;"></div><div style="position:absolute;left:1689.0px;top:589.4px;width:22.0px;height:22.0px;background:#fff;border:1px solid #c9c9c9;border-radius:5px;box-sizing:border-box;"></div><div style="position:absolute;left:1814.0px;top:589.4px;width:22.0px;height:22.0px;background:#fff;border:1px solid #c9c9c9;border-radius:5px;box-sizing:border-box;"></div><div style="position:absolute;left:1139px;top:663px;width:757px;height:2px;background:#d0d4e4;"></div><div style="position:absolute;left:1189.0px;top:631.9px;width:22.0px;height:22.0px;background:#fff;border:1px solid #c9c9c9;border-radius:5px;box-sizing:border-box;"></div><div style="position:absolute;left:1314.0px;top:631.9px;width:22.0px;height:22.0px;background:#fff;border:1px solid #c9c9c9;border-radius:5px;box-sizing:border-box;"></div><div style="position:absolute;left:1439.0px;top:631.9px;width:22.0px;height:22.0px;background:#fff;border:1px solid #c9c9c9;border-radius:5px;box-sizing:border-box;"></div><div style="position:absolute;left:1564.0px;top:631.9px;width:22.0px;height:22.0px;background:#fff;border:1px solid #c9c9c9;border-radius:5px;box-sizing:border-box;"></div><div style="position:absolute;left:1689.0px;top:631.9px;width:22.0px;height:22.0px;background:#fff;border:1px solid #c9c9c9;border-radius:5px;box-sizing:border-box;"></div><div style="position:absolute;left:1814.0px;top:631.9px;width:22.0px;height:22.0px;background:#fff;border:1px solid #c9c9c9;border-radius:5px;box-sizing:border-box;"></div><div style="position:absolute;left:1139px;top:705px;width:757px;height:2px;background:#d0d4e4;"></div><div style="position:absolute;left:1189.0px;top:674.4px;width:22.0px;height:22.0px;background:#fff;border:1px solid #c9c9c9;border-radius:5px;box-sizing:border-box;"></div><div style="position:absolute;left:1314.0px;top:674.4px;width:22.0px;height:22.0px;background:#fff;border:1px solid #c9c9c9;border-radius:5px;box-sizing:border-box;"></div><div style="position:absolute;left:1439.0px;top:674.4px;width:22.0px;height:22.0px;background:#fff;border:1px solid #c9c9c9;border-radius:5px;box-sizing:border-box;"></div><div style="position:absolute;left:1564.0px;top:674.4px;width:22.0px;height:22.0px;background:#fff;border:1px solid #c9c9c9;border-radius:5px;box-sizing:border-box;"></div><div style="position:absolute;left:1689.0px;top:674.4px;width:22.0px;height:22.0px;background:#fff;border:1px solid #c9c9c9;border-radius:5px;box-sizing:border-box;"></div><div style="position:absolute;left:1814.0px;top:674.4px;width:22.0px;height:22.0px;background:#fff;border:1px solid #c9c9c9;border-radius:5px;box-sizing:border-box;"></div><div style="position:absolute;left:1139px;top:747px;width:757px;height:2px;background:#d0d4e4;"></div><div style="position:absolute;left:1189.0px;top:716.4px;width:22.0px;height:22.0px;background:#fff;border:1px solid #c9c9c9;border-radius:5px;box-sizing:border-box;"></div><div style="position:absolute;left:1314.0px;top:716.4px;width:22.0px;height:22.0px;background:#fff;border:1px solid #c9c9c9;border-radius:5px;box-sizing:border-box;"></div><div style="position:absolute;left:1439.0px;top:716.4px;width:22.0px;height:22.0px;background:#fff;border:1px solid #c9c9c9;border-radius:5px;box-sizing:border-box;"></div><div style="position:absolute;left:1564.0px;top:716.4px;width:22.0px;height:22.0px;background:#fff;border:1px solid #c9c9c9;border-radius:5px;box-sizing:border-box;"></div><div style="position:absolute;left:1689.0px;top:716.4px;width:22.0px;height:22.0px;background:#fff;border:1px solid #c9c9c9;border-radius:5px;box-sizing:border-box;"></div><div style="position:absolute;left:1814.0px;top:716.4px;width:22.0px;height:22.0px;background:#fff;border:1px solid #c9c9c9;border-radius:5px;box-sizing:border-box;"></div><div style="position:absolute;left:1139px;top:790px;width:757px;height:2px;background:#d0d4e4;"></div><div style="position:absolute;left:1189.0px;top:758.9px;width:22.0px;height:22.0px;background:#fff;border:1px solid #c9c9c9;border-radius:5px;box-sizing:border-box;"></div><div style="position:absolute;left:1314.0px;top:758.9px;width:22.0px;height:22.0px;background:#fff;border:1px solid #c9c9c9;border-radius:5px;box-sizing:border-box;"></div><div style="position:absolute;left:1439.0px;top:758.9px;width:22.0px;height:22.0px;background:#fff;border:1px solid #c9c9c9;border-radius:5px;box-sizing:border-box;"></div><div style="position:absolute;left:1564.0px;top:758.9px;width:22.0px;height:22.0px;background:#fff;border:1px solid #c9c9c9;border-radius:5px;box-sizing:border-box;"></div><div style="position:absolute;left:1689.0px;top:758.9px;width:22.0px;height:22.0px;background:#fff;border:1px solid #c9c9c9;border-radius:5px;box-sizing:border-box;"></div><div style="position:absolute;left:1814.0px;top:758.9px;width:22.0px;height:22.0px;background:#fff;border:1px solid #c9c9c9;border-radius:5px;box-sizing:border-box;"></div><div style="position:absolute;left:1139px;top:832px;width:757px;height:2px;background:#d0d4e4;"></div><div style="position:absolute;left:1189.0px;top:801.4px;width:22.0px;height:22.0px;background:#fff;border:1px solid #c9c9c9;border-radius:5px;box-sizing:border-box;"></div><div style="position:absolute;left:1314.0px;top:801.4px;width:22.0px;height:22.0px;background:#fff;border:1px solid #c9c9c9;border-radius:5px;box-sizing:border-box;"></div><div style="position:absolute;left:1439.0px;top:801.4px;width:22.0px;height:22.0px;background:#fff;border:1px solid #c9c9c9;border-radius:5px;box-sizing:border-box;"></div><div style="position:absolute;left:1564.0px;top:801.4px;width:22.0px;height:22.0px;background:#fff;border:1px solid #c9c9c9;border-radius:5px;box-sizing:border-box;"></div><div style="position:absolute;left:1689.0px;top:801.4px;width:22.0px;height:22.0px;background:#fff;border:1px solid #c9c9c9;border-radius:5px;box-sizing:border-box;"></div><div style="position:absolute;left:1814.0px;top:801.4px;width:22.0px;height:22.0px;background:#fff;border:1px solid #c9c9c9;border-radius:5px;box-sizing:border-box;"></div><div style="position:absolute;left:1139px;top:874px;width:757px;height:2px;background:#d0d4e4;"></div><div style="position:absolute;left:1189.0px;top:843.4px;width:22.0px;height:22.0px;background:#fff;border:1px solid #c9c9c9;border-radius:5px;box-sizing:border-box;"></div><div style="position:absolute;left:1314.0px;top:843.4px;width:22.0px;height:22.0px;background:#fff;border:1px solid #c9c9c9;border-radius:5px;box-sizing:border-box;"></div><div style="position:absolute;left:1439.0px;top:843.4px;width:22.0px;height:22.0px;background:#fff;border:1px solid #c9c9c9;border-radius:5px;box-sizing:border-box;"></div><div style="position:absolute;left:1564.0px;top:843.4px;width:22.0px;height:22.0px;background:#fff;border:1px solid #c9c9c9;border-radius:5px;box-sizing:border-box;"></div><div style="position:absolute;left:1689.0px;top:843.4px;width:22.0px;height:22.0px;background:#fff;border:1px solid #c9c9c9;border-radius:5px;box-sizing:border-box;"></div><div style="position:absolute;left:1814.0px;top:843.4px;width:22.0px;height:22.0px;background:#fff;border:1px solid #c9c9c9;border-radius:5px;box-sizing:border-box;"></div><div style="position:absolute;left:636px;top:283px;width:1px;height:571px;background:#d9dcea;"></div><div style="position:absolute;left:699px;top:283px;width:1px;height:571px;background:#d9dcea;"></div><div style="position:absolute;left:949px;top:283px;width:1px;height:571px;background:#d9dcea;"></div><div style="position:absolute;left:1137px;top:283px;width:2px;height:571px;background:#c9c9c9;"></div><div style="position:absolute;left:1263px;top:283px;width:1px;height:571px;background:#d9dcea;"></div><div style="position:absolute;left:1388px;top:283px;width:1px;height:571px;background:#d9dcea;"></div><div style="position:absolute;left:1513px;top:283px;width:1px;height:571px;background:#d9dcea;"></div><div style="position:absolute;left:1638px;top:283px;width:1px;height:571px;background:#d9dcea;"></div><div style="position:absolute;left:1763px;top:283px;width:1px;height:571px;background:#d9dcea;"></div><div style="position:absolute;left:1888px;top:283px;width:1px;height:571px;background:#d9dcea;"></div></div><div style="position:absolute;left:636.4px;top:181.5px;width:1268.1999999999998px;height:101.5px;background:#f3f4f9;border-top:1px solid #d9dcea;box-sizing:border-box;"></div><div style="position:absolute;left:636.4px;top:283px;width:1268.1999999999998px;height:1px;background:#d9dcea;"></div><div style="position:absolute;left:636px;top:181.5px;width:1px;height:101.5px;background:#d9dcea;"></div><div style="position:absolute;left:699px;top:181.5px;width:1px;height:101.5px;background:#d9dcea;"></div><div style="position:absolute;left:949px;top:181.5px;width:1px;height:101.5px;background:#d9dcea;"></div><div style="position:absolute;left:1137px;top:181.5px;width:1px;height:101.5px;background:#d9dcea;"></div><div style="position:absolute;left:1138px;top:181.5px;width:1px;height:101.5px;background:#d9dcea;"></div><div style="position:absolute;left:1263px;top:181.5px;width:1px;height:101.5px;background:#d9dcea;"></div><div style="position:absolute;left:1388px;top:181.5px;width:1px;height:101.5px;background:#d9dcea;"></div><div style="position:absolute;left:1513px;top:181.5px;width:1px;height:101.5px;background:#d9dcea;"></div><div style="position:absolute;left:1638px;top:181.5px;width:1px;height:101.5px;background:#d9dcea;"></div><div style="position:absolute;left:1763px;top:222.6px;width:1px;height:60.400000000000006px;background:#d9dcea;"></div><div style="position:absolute;left:1888px;top:181.5px;width:1px;height:101.5px;background:#d9dcea;"></div><div style="position:absolute;left:1638.3px;top:222.6px;width:250.10000000000014px;height:1.0px;background:#d9dcea;"></div><div style="position:absolute;left:636.4px;width:60px;text-align:center;top:223.53px;font-size:16.5px;line-height:16.5px;font-weight:700;color:#1a1a1a;white-space:nowrap;letter-spacing:0px;">STT</div><div style="position:absolute;left:703.0px;width:240px;text-align:center;top:201.53px;font-size:16.5px;line-height:16.5px;font-weight:700;color:#1a1a1a;white-space:nowrap;letter-spacing:0px;">Họ và tên</div><div style="position:absolute;left:952.0px;width:180px;text-align:center;top:201.53px;font-size:16.5px;line-height:16.5px;font-weight:700;color:#1a1a1a;white-space:nowrap;letter-spacing:0px;">Ngày sinh</div><div style="position:absolute;left:707.7px;top:244.4px;width:236.29999999999995px;height:31.400000000000006px;background:#fff;border:1px solid #e3e3e3;border-radius:5px;box-sizing:border-box;"></div><div style="position:absolute;left:957.4px;top:244.4px;width:174.0000000000001px;height:31.400000000000006px;background:#fff;border:1px solid #e3e3e3;border-radius:5px;box-sizing:border-box;"></div><svg style="position:absolute;left:714.5px;top:254.5px;overflow:visible" width="13" height="13" viewBox="0 0 13 13"><path d="M1 1.5 H12 L7.6 6.8 V11.5 L5.4 10.2 V6.8 Z" fill="none" stroke="#6b6f7a" stroke-width="1.3" stroke-linejoin="round"/></svg><svg style="position:absolute;left:964px;top:254.5px;overflow:visible" width="13" height="13" viewBox="0 0 13 13"><path d="M1 1.5 H12 L7.6 6.8 V11.5 L5.4 10.2 V6.8 Z" fill="none" stroke="#6b6f7a" stroke-width="1.3" stroke-linejoin="round"/></svg><svg style="position:absolute;left:1100px;top:250px;overflow:visible" width="22" height="20" viewBox="0 0 22 20"><rect x="1.5" y="2.8" width="18.5" height="15.7" rx="2.5" fill="none" stroke="#07bc6c" stroke-width="1.8"/><line x1="1.5" y1="7.3" x2="20" y2="7.3" stroke="#07bc6c" stroke-width="1.8"/><line x1="6" y1="0.8" x2="6" y2="4" stroke="#07bc6c" stroke-width="1.8"/><line x1="15.5" y1="0.8" x2="15.5" y2="4" stroke="#07bc6c" stroke-width="1.8"/><g stroke="#07bc6c" stroke-width="1.6"><line x1="5" y1="11" x2="8" y2="11"/><line x1="9.7" y1="11" x2="12.7" y2="11"/><line x1="14.4" y1="11" x2="17.4" y2="11"/><line x1="5" y1="14.5" x2="8" y2="14.5"/><line x1="9.7" y1="14.5" x2="12.7" y2="14.5"/></g></svg><div style="position:absolute;left:1131.0px;width:120px;text-align:center;top:212.53px;font-size:16.5px;line-height:16.5px;font-weight:700;color:#1a1a1a;white-space:nowrap;letter-spacing:0px;">Sổ liên lạc</div><div style="position:absolute;left:1131.0px;width:120px;text-align:center;top:234.03px;font-size:16.5px;line-height:16.5px;font-weight:700;color:#1a1a1a;white-space:nowrap;letter-spacing:0px;">điện tử</div><svg style="position:absolute;left:1237.5px;top:230.75px;overflow:visible" width="11" height="5.5" viewBox="0 0 11 5.5"><path d="M1 1 L5.5 5.0 L10 1" fill="none" stroke="#8a8a8a" stroke-width="1.9" stroke-linecap="round" stroke-linejoin="round"/></svg><div style="position:absolute;left:1256.0px;width:120px;text-align:center;top:212.53px;font-size:16.5px;line-height:16.5px;font-weight:700;color:#1a1a1a;white-space:nowrap;letter-spacing:0px;">Sữa học</div><div style="position:absolute;left:1256.0px;width:120px;text-align:center;top:234.03px;font-size:16.5px;line-height:16.5px;font-weight:700;color:#1a1a1a;white-space:nowrap;letter-spacing:0px;">đường</div><svg style="position:absolute;left:1362.5px;top:230.75px;overflow:visible" width="11" height="5.5" viewBox="0 0 11 5.5"><path d="M1 1 L5.5 5.0 L10 1" fill="none" stroke="#8a8a8a" stroke-width="1.9" stroke-linecap="round" stroke-linejoin="round"/></svg><div style="position:absolute;left:1381.0px;width:120px;text-align:center;top:212.53px;font-size:16.5px;line-height:16.5px;font-weight:700;color:#1a1a1a;white-space:nowrap;letter-spacing:0px;">Tiền ăn</div><div style="position:absolute;left:1381.0px;width:120px;text-align:center;top:234.03px;font-size:16.5px;line-height:16.5px;font-weight:700;color:#1a1a1a;white-space:nowrap;letter-spacing:0px;">bán trú</div><svg style="position:absolute;left:1487.5px;top:230.75px;overflow:visible" width="11" height="5.5" viewBox="0 0 11 5.5"><path d="M1 1 L5.5 5.0 L10 1" fill="none" stroke="#8a8a8a" stroke-width="1.9" stroke-linecap="round" stroke-linejoin="round"/></svg><div style="position:absolute;left:1506.0px;width:120px;text-align:center;top:212.53px;font-size:16.5px;line-height:16.5px;font-weight:700;color:#1a1a1a;white-space:nowrap;letter-spacing:0px;">Bảo hiểm y</div><div style="position:absolute;left:1506.0px;width:120px;text-align:center;top:234.03px;font-size:16.5px;line-height:16.5px;font-weight:700;color:#1a1a1a;white-space:nowrap;letter-spacing:0px;">tế</div><svg style="position:absolute;left:1612.5px;top:230.75px;overflow:visible" width="11" height="5.5" viewBox="0 0 11 5.5"><path d="M1 1 L5.5 5.0 L10 1" fill="none" stroke="#8a8a8a" stroke-width="1.9" stroke-linecap="round" stroke-linejoin="round"/></svg><div style="position:absolute;left:1663.0px;width:200px;text-align:center;top:193.53px;font-size:16.5px;line-height:16.5px;font-weight:700;color:#1a1a1a;white-space:nowrap;letter-spacing:0px;">Đồng phục</div><div style="position:absolute;left:1631.5px;width:120px;text-align:center;top:232.53px;font-size:16.5px;line-height:16.5px;font-weight:400;color:#1a1a1a;white-space:nowrap;letter-spacing:0px;">Đồng phục</div><div style="position:absolute;left:1631.5px;width:120px;text-align:center;top:255.03px;font-size:16.5px;line-height:16.5px;font-weight:400;color:#1a1a1a;white-space:nowrap;letter-spacing:0px;">mùa đông</div><svg style="position:absolute;left:1737.5px;top:250.25px;overflow:visible" width="11" height="5.5" viewBox="0 0 11 5.5"><path d="M1 1 L5.5 5.0 L10 1" fill="none" stroke="#8a8a8a" stroke-width="1.9" stroke-linecap="round" stroke-linejoin="round"/></svg><div style="position:absolute;left:1756.5px;width:120px;text-align:center;top:232.53px;font-size:16.5px;line-height:16.5px;font-weight:400;color:#1a1a1a;white-space:nowrap;letter-spacing:0px;">Đồng phục</div><div style="position:absolute;left:1756.5px;width:120px;text-align:center;top:255.03px;font-size:16.5px;line-height:16.5px;font-weight:400;color:#1a1a1a;white-space:nowrap;letter-spacing:0px;">mùa hè</div><svg style="position:absolute;left:1862.5px;top:250.25px;overflow:visible" width="11" height="5.5" viewBox="0 0 11 5.5"><path d="M1 1 L5.5 5.0 L10 1" fill="none" stroke="#8a8a8a" stroke-width="1.9" stroke-linecap="round" stroke-linejoin="round"/></svg><div style="position:absolute;left:1896px;top:285px;width:8.599999999999909px;height:569px;background:#ececec;border-radius:4px;"></div><div style="position:absolute;left:1896px;top:285px;width:8.599999999999909px;height:349px;background:#a8a8a8;border-radius:4px;"></div><div style="position:absolute;left:636.4px;top:854px;width:1259.6px;height:11px;background:#fff;"></div><div style="position:absolute;left:637px;top:854px;width:499px;height:10px;background:#ececec;border-radius:5px;"></div><div style="position:absolute;left:1139px;top:854px;width:757px;height:10px;background:#ececec;border-radius:5px;"></div><div style="position:absolute;left:1139px;top:854px;width:441px;height:10px;background:linear-gradient(#a4a4a4,#b0b0b0);border-radius:5px;"></div><div style="position:absolute;left:636.4px;top:865px;width:1268.1999999999998px;height:37.39999999999998px;background:#dce2ee;"></div><div style="position:absolute;left:1137px;top:865px;width:1px;height:37.39999999999998px;background:#f4f6fa;"></div><div style="position:absolute;left:1263px;top:865px;width:1px;height:37.39999999999998px;background:#d3d9e6;"></div><div style="position:absolute;left:1388px;top:865px;width:1px;height:37.39999999999998px;background:#d3d9e6;"></div><div style="position:absolute;left:1513px;top:865px;width:1px;height:37.39999999999998px;background:#d3d9e6;"></div><div style="position:absolute;left:1638px;top:865px;width:1px;height:37.39999999999998px;background:#d3d9e6;"></div><div style="position:absolute;left:1763px;top:865px;width:1px;height:37.39999999999998px;background:#d3d9e6;"></div><div style="position:absolute;left:1888px;top:865px;width:1px;height:37.39999999999998px;background:#d3d9e6;"></div><div style="position:absolute;left:713px;top:876.53px;font-size:16.5px;line-height:16.5px;font-weight:400;color:#3a3a3a;white-space:nowrap;letter-spacing:0.076px;">Tổng: <b>22</b> kết quả</div><div style="position:absolute;left:1190.5px;width:60px;text-align:right;top:876.53px;font-size:16.5px;line-height:16.5px;font-weight:400;color:#2a2a2a;white-space:nowrap;letter-spacing:0px;">1</div><div style="position:absolute;left:1315.5px;width:60px;text-align:right;top:876.53px;font-size:16.5px;line-height:16.5px;font-weight:400;color:#2a2a2a;white-space:nowrap;letter-spacing:0px;">1</div><div style="position:absolute;left:1440.5px;width:60px;text-align:right;top:876.53px;font-size:16.5px;line-height:16.5px;font-weight:400;color:#2a2a2a;white-space:nowrap;letter-spacing:0px;">0</div><div style="position:absolute;left:1565.5px;width:60px;text-align:right;top:876.53px;font-size:16.5px;line-height:16.5px;font-weight:400;color:#2a2a2a;white-space:nowrap;letter-spacing:0px;">1</div><div style="position:absolute;left:1690.5px;width:60px;text-align:right;top:876.53px;font-size:16.5px;line-height:16.5px;font-weight:400;color:#2a2a2a;white-space:nowrap;letter-spacing:0px;">0</div><div style="position:absolute;left:1815.5px;width:60px;text-align:right;top:876.53px;font-size:16.5px;line-height:16.5px;font-weight:400;color:#2a2a2a;white-space:nowrap;letter-spacing:0px;">1</div><div style="position:absolute;left:636.2px;top:925.5px;width:21.0px;height:21.0px;border:2px solid #1e88e5;border-radius:50%;box-sizing:border-box;"></div><div style="position:absolute;left:645.8px;top:931px;width:1.8000000000000682px;height:2px;background:#1e88e5;"></div><div style="position:absolute;left:645.8px;top:934.5px;width:1.8000000000000682px;height:7.0px;background:#1e88e5;"></div><div style="position:absolute;left:667px;top:928.03px;font-size:16.5px;line-height:16.5px;font-weight:400;color:#222;white-space:nowrap;letter-spacing:0.235px;">Nhấn vào tiêu đề cột để tích chọn và bỏ tích chọn cho cả cột</div><div style="position:absolute;left:1785px;top:916.3px;width:119.70000000000005px;height:39.700000000000045px;background:#07bc6c;border-radius:6px;"></div><div style="position:absolute;left:1795.0px;width:100px;text-align:center;top:928.03px;font-size:16.5px;line-height:16.5px;font-weight:400;color:#fff;white-space:nowrap;letter-spacing:0px;">Lưu</div><div style="position:absolute;left:1900px;top:467px;width:20px;height:40px;background:#0b72e7;border-radius:6px 0 0 6px;box-shadow:-2px 0 6px rgba(0,0,0,0.08);"></div><svg style="position:absolute;left:1903px;top:480px;overflow:visible" width="12" height="14" viewBox="0 0 12 14"><path d="M8.3 2.8 L4.3 7 L8.3 11.2" fill="none" stroke="#fff" stroke-width="2.8" stroke-linecap="round" stroke-linejoin="round"/></svg></div></div></div>
<div class="shot" style="left:276px;top:564px;width:1918px;height:965px;"><div style="position:absolute;left:-2px;top:-5px;"><div style="position:absolute;left:0;top:0;width:1920px;height:970px;background:#fff;"><div style="position:absolute;left:0px;top:0px;width:1916px;height:62px;background:#fff;"></div><svg style="position:absolute;left:20px;top:16px;overflow:visible" width="30" height="30" viewBox="0 0 30 30"><circle cx="7.5" cy="7.5" r="2.55" fill="#606060"/><circle cx="7.5" cy="15" r="2.55" fill="#606060"/><circle cx="7.5" cy="22.5" r="2.55" fill="#606060"/><circle cx="15" cy="7.5" r="2.55" fill="#606060"/><circle cx="15" cy="15" r="2.55" fill="#606060"/><circle cx="15" cy="22.5" r="2.55" fill="#606060"/><circle cx="22.5" cy="7.5" r="2.55" fill="#606060"/><circle cx="22.5" cy="15" r="2.55" fill="#606060"/><circle cx="22.5" cy="22.5" r="2.55" fill="#606060"/></svg><svg style="position:absolute;left:63px;top:7px;overflow:visible" width="50" height="50" viewBox="0 0 50 50">
      <defs><linearGradient id="lg" x1="0" y1="0" x2="0.25" y2="1"><stop offset="0" stop-color="#ff9d55"/><stop offset="0.55" stop-color="#ff7a45"/><stop offset="1" stop-color="#ff633c"/></linearGradient></defs>
      <path d="M0.5 25 C0.5 4 4 0.5 25 0.5 C46 0.5 49.5 4 49.5 25 C49.5 46 46 49.5 25 49.5 C4 49.5 0.5 46 0.5 25 Z" fill="url(#lg)"/>
      <path d="M25 13.1 L40.2 21.7 L37.4 25.1 L40.2 27.8 L25.2 36.6 L9.8 27.8 L12.6 25.1 L9.8 21.7 Z" fill="#fff9f1"/>
      <path d="M12.6 25.1 L25.2 31.8 L37.4 25.1 L40.2 27.8 L25.2 36.6 L9.8 27.8 Z" fill="#fdeedf" opacity="0.8"/>
      <g transform="translate(24.5 21.3) rotate(-24) scale(1 0.8)">
        <line x1="-7.2" y1="0.3" x2="-3.8" y2="0.3" stroke="#ff8617" stroke-width="1.9" stroke-linecap="round"/>
        <line x1="3.8" y1="-0.3" x2="7.2" y2="-0.3" stroke="#ff8617" stroke-width="1.9" stroke-linecap="round"/>
        <text x="0" y="5" font-family="Liberation Sans" font-weight="700" font-size="13.5" fill="#ff8617" stroke="#ff8617" stroke-width="0.7" text-anchor="middle">S</text>
      </g></svg><div style="position:absolute;left:125.8px;top:19.53px;font-size:23px;line-height:23px;font-weight:400;color:#1f1f1f;white-space:nowrap;letter-spacing:-0.047px;-webkit-text-stroke:0.45px #1f1f1f;">Khoản thu</div><div style="position:absolute;left:276.6px;top:24.15px;font-size:20.5px;line-height:20.5px;font-weight:400;color:#1f1f1f;white-space:nowrap;letter-spacing:0.274px;-webkit-text-stroke:0.35px #1f1f1f;">Lập kế hoạch thu</div><div style="position:absolute;left:1036px;top:13px;width:424px;height:39px;border:1px solid #cfcfcf;border-radius:6px;box-sizing:border-box;background:#fff;"></div><div style="position:absolute;left:1036px;top:13px;width:39px;height:39px;background:#07bc6c;border-radius:6px 0 0 6px;"></div><svg style="position:absolute;left:1043px;top:19px;overflow:visible" width="26" height="26" viewBox="0 0 26 26"><path d="M3 12.5 L13 3.5 L23 12.5 M6 10 V24 H10.5 V17 H15.5 V24 H20 V10" fill="none" stroke="#fff" stroke-width="2" stroke-linejoin="round" stroke-linecap="round"/><rect x="11" y="9.5" width="4" height="3.5" fill="none" stroke="#fff" stroke-width="1.6"/></svg><div style="position:absolute;left:1086px;top:32.5px;width:5px;height:1.5px;background:#444;"></div><div style="position:absolute;left:1088px;top:32.5px;width:1.5px;height:4.5px;background:#444;"></div><div style="position:absolute;left:1090px;top:17px;width:252px;height:26px;background:linear-gradient(90deg,#e4e4e4,#dcdcdc 20%,#e6e6e6 40%,#dadada 60%,#e4e4e4 80%,#dedede);filter:blur(0.6px);"></div><div style="position:absolute;left:1470px;top:14px;width:151px;height:38px;border:1px solid #d0d0d0;border-radius:6px;box-sizing:border-box;background:#fff;"></div><div style="position:absolute;left:1484px;top:25.11px;font-size:17px;line-height:17px;font-weight:400;color:#1f1f1f;white-space:nowrap;letter-spacing:0.3px;">2025 - 2026</div><svg style="position:absolute;left:1598.5px;top:30.25px;overflow:visible" width="11" height="5.5" viewBox="0 0 11 5.5"><path d="M1 1 L5.5 5.0 L10 1" fill="none" stroke="#4f4f6b" stroke-width="2" stroke-linecap="round" stroke-linejoin="round"/></svg><div style="position:absolute;left:1632px;top:13px;width:120px;height:40px;background:#b6e4cc;border-radius:6px;"></div><div style="position:absolute;left:1632.0px;width:120px;text-align:center;top:25.53px;font-size:16.5px;line-height:16.5px;font-weight:700;color:#16ad66;white-space:nowrap;letter-spacing:-0.45px;">Hướng dẫn</div><svg style="position:absolute;left:1762px;top:20px;overflow:visible" width="26" height="28" viewBox="0 0 26 28"><path d="M12 2.5 C6.5 2.5 4.5 6.5 4.5 10.5 C4.5 14.5 3.8 16.5 1.5 19.5 C0.8 20.5 1.2 21.8 3 22.3 C9 23.8 16 23.8 21.5 22.3 C23.2 21.8 23.5 20.6 22.8 19.5 L19.2 13.5" fill="none" stroke="#5f6570" stroke-width="2.4" stroke-linecap="round" stroke-linejoin="round"/><path d="M9.5 25.5 Q12 27.5 14.5 25.5" fill="none" stroke="#5f6570" stroke-width="2.4" stroke-linecap="round"/></svg><div style="position:absolute;left:1778.8px;top:11.7px;width:19.200000000000045px;height:19.2px;background:#ff5a5f;border-radius:50%;"></div><div style="position:absolute;left:1774.0px;width:30px;text-align:center;top:14.80px;font-size:13px;line-height:13px;font-weight:700;color:#fff;white-space:nowrap;letter-spacing:-0.4px;">9+</div><div style="position:absolute;left:1811.5px;top:19.5px;width:24.799999999999955px;height:25.0px;border:2.4px solid #5f6570;border-radius:50%;box-sizing:border-box;"></div><svg style="position:absolute;left:1816px;top:24px;overflow:visible" width="16" height="16" viewBox="0 0 16 16"><path d="M5 6 C5 3.5 6.5 2.3 8 2.3 C9.8 2.3 11.2 3.6 11.2 5.4 C11.2 7.5 8.2 8 8.2 10.5" fill="none" stroke="#5d636e" stroke-width="2.1" stroke-linecap="round"/><circle cx="8.2" cy="13.8" r="1.3" fill="#5d636e"/></svg><svg style="position:absolute;left:1859px;top:11.5px;overflow:visible" width="42" height="43" viewBox="0 0 42 43"><circle cx="21.2" cy="20.8" r="21.1" fill="#cccccc"/><path d="M8 37.6 L16 35.5 C16.5 32 14.5 30 13 27 C11.3 23.5 11.2 20.5 11.8 15.5 C12.5 9.5 16 6.6 21 6.6 C26 6.6 29.5 9.5 30.2 15.5 C30.8 20.5 30.7 23.5 29 27 C27.5 30 25.5 32 26 35.5 L34 37.6 L34 44 L8 44 Z" fill="#fff"/></svg><div style="position:absolute;left:0px;top:62px;width:256px;height:906px;background:#3c3c3c;"></div><div style="position:absolute;left:0px;top:142px;width:256px;height:58px;background:#4a4a4a;"></div><div style="position:absolute;left:0px;top:142px;width:3px;height:58px;background:#07bc6c;"></div><svg style="position:absolute;left:12px;top:91px;overflow:visible" width="34" height="30" viewBox="0 0 34 30">
      <rect x="2" y="7" width="5.5" height="21" fill="none" stroke="#ffffff" stroke-width="1.9"/>
      <rect x="10.8" y="17.5" width="5.2" height="10.5" fill="none" stroke="#ffffff" stroke-width="1.9"/>
      <rect x="19" y="2.3" width="5.2" height="25.7" fill="none" stroke="#19c46e" stroke-width="1.9"/>
      <rect x="27.8" y="11" width="5.2" height="17" fill="none" stroke="#ffffff" stroke-width="1.9"/></svg><svg style="position:absolute;left:12px;top:153px;overflow:visible" width="34" height="36" viewBox="0 0 34 36">
      <rect x="2.2" y="3.8" width="30" height="29.8" rx="4" fill="none" stroke="#ffffff" stroke-width="1.9"/>
      <line x1="2.2" y1="9.8" x2="32.2" y2="9.8" stroke="#ffffff" stroke-width="1.9"/>
      <circle cx="9.5" cy="4" r="1.8" fill="none" stroke="#ffffff" stroke-width="1.5"/>
      <circle cx="17" cy="4" r="1.8" fill="none" stroke="#ffffff" stroke-width="1.5"/>
      <circle cx="24.5" cy="4" r="1.8" fill="none" stroke="#ffffff" stroke-width="1.5"/>
      <text x="17" y="27.5" font-family="Liberation Sans" font-weight="700" font-size="15" fill="#f5c000" text-anchor="middle">$</text></svg><svg style="position:absolute;left:13px;top:219px;overflow:visible" width="32" height="34" viewBox="0 0 32 34">
      <circle cx="14.5" cy="14.5" r="7.2" fill="none" stroke="#ffffff" stroke-width="1.8"/>
      <text x="14.5" y="18.8" font-family="Liberation Sans" font-weight="700" font-size="11" fill="#19c46e" text-anchor="middle">$</text>
      <line x1="14.5" y1="1" x2="14.5" y2="5" stroke="#ffffff" stroke-width="1.5"/>
      <line x1="10.5" y1="3" x2="10.5" y2="5.5" stroke="#ffffff" stroke-width="1.5"/>
      <line x1="18.5" y1="3" x2="18.5" y2="5.5" stroke="#ffffff" stroke-width="1.5"/>
      <rect x="2" y="23" width="4" height="8.5" fill="none" stroke="#ffffff" stroke-width="1.6"/>
      <path d="M6 24.5 C10 23 13 23.5 16 25.5 L20 25.5 M6 30.5 C11 32 15 32 20 30 L28.5 25.5 C27.5 24 25 24 22 25.5 L17 27.5" fill="none" stroke="#ffffff" stroke-width="1.6" stroke-linejoin="round" stroke-linecap="round"/></svg><svg style="position:absolute;left:15px;top:285px;overflow:visible" width="28" height="32" viewBox="0 0 28 32">
      <path d="M2 2 H18.5 L26 9.5 V30 H2 Z" fill="none" stroke="#ffffff" stroke-width="1.9" stroke-linejoin="round"/>
      <path d="M18.5 2 V9.5 H26" fill="none" stroke="#ffffff" stroke-width="1.6"/>
      <line x1="6.5" y1="10" x2="12.5" y2="10" stroke="#f5c000" stroke-width="1.9"/>
      <line x1="6.5" y1="15.5" x2="20.5" y2="15.5" stroke="#f5c000" stroke-width="1.9"/>
      <line x1="6.5" y1="21" x2="20.5" y2="21" stroke="#f5c000" stroke-width="1.9"/></svg><svg style="position:absolute;left:15px;top:349px;overflow:visible" width="28" height="35" viewBox="0 0 28 35">
      <path d="M4 2 H26 V27 H7 C4.5 27 3 28.5 3 30 C3 31.8 4.5 32.8 7 32.8 H26" fill="none" stroke="#ffffff" stroke-width="1.9" stroke-linejoin="round"/>
      <path d="M4 2 V29" fill="none" stroke="#ffffff" stroke-width="1.9"/>
      <line x1="7" y1="29.9" x2="26" y2="29.9" stroke="#ffffff" stroke-width="1.5"/>
      <text x="14.5" y="18.5" font-family="Liberation Sans" font-weight="700" font-size="14" fill="#19c46e" text-anchor="middle">$</text></svg><svg style="position:absolute;left:14px;top:416px;overflow:visible" width="30" height="30" viewBox="0 0 30 30">
      <path d="M13.7 2.3 A13 13 0 1 0 26.7 15.3 H13.7 Z" fill="none" stroke="#ffffff" stroke-width="1.9" stroke-linejoin="round"/>
      <path d="M17.5 3 A11.5 11.5 0 0 1 26 11.3" fill="none" stroke="#f5c000" stroke-width="1.9"/></svg><svg style="position:absolute;left:13px;top:481px;overflow:visible" width="33" height="30" viewBox="0 0 33 30">
      <path d="M31 17 V3 C31 1.6 30.2 0.9 28.8 0.9 H3 C1.6 0.9 0.9 1.6 0.9 3 V21.5 C0.9 22.9 1.6 23.6 3 23.6 H17" fill="none" stroke="#ffffff" stroke-width="1.8"/>
      <line x1="0.9" y1="6.8" x2="31" y2="6.8" stroke="#ffffff" stroke-width="1.8"/>
      <line x1="4.3" y1="13.6" x2="8.3" y2="13.6" stroke="#ffffff" stroke-width="1.8"/>
      <line x1="4.3" y1="17.2" x2="12.5" y2="17.2" stroke="#ffffff" stroke-width="1.8"/>
      <circle cx="24.3" cy="21.6" r="6.2" fill="#3c3c3c" stroke="#19c46e" stroke-width="1.8"/>
      <path d="M21.6 21.6 L23.6 23.6 L27.1 19.9" fill="none" stroke="#19c46e" stroke-width="1.7" stroke-linecap="round" stroke-linejoin="round"/></svg><svg style="position:absolute;left:14px;top:546px;overflow:visible" width="30" height="30" viewBox="0 0 30 30">
      <path d="M15.00 0.50 L17.83 0.78 L19.21 4.84 L21.11 5.85 L25.25 4.75 L27.06 6.94 L25.16 10.79 L25.79 12.85 L29.50 15.00 L29.22 17.83 L25.16 19.21 L24.15 21.11 L25.25 25.25 L23.06 27.06 L19.21 25.16 L17.15 25.79 L15.00 29.50 L12.17 29.22 L10.79 25.16 L8.89 24.15 L4.75 25.25 L2.94 23.06 L4.84 19.21 L4.21 17.15 L0.50 15.00 L0.78 12.17 L4.84 10.79 L5.85 8.89 L4.75 4.75 L6.94 2.94 L10.79 4.84 L12.85 4.21 Z" fill="none" stroke="#ffffff" stroke-width="1.8" stroke-linejoin="round" transform="rotate(11.25 15 15)"/>
      <circle cx="15" cy="15" r="5.2" fill="none" stroke="#f5c000" stroke-width="2"/></svg><svg style="position:absolute;left:9px;top:609px;overflow:visible" width="34" height="29" viewBox="0 0 34 29">
      <path d="M2 4 V26 H14 C15 26 16 27 17 27 C18 27 19 26 20 26 H32 V4" fill="none" stroke="#ffffff" stroke-width="1.7"/>
      <path d="M5 1.5 H14 C15.5 1.5 17 2.5 17 4 V25 C16 23.5 15 23.5 14 23.5 H5 Z" fill="none" stroke="#ffffff" stroke-width="1.7"/>
      <path d="M29 1.5 H20 C18.5 1.5 17 2.5 17 4 V25 C18 23.5 19 23.5 20 23.5 H29 Z" fill="none" stroke="#ffffff" stroke-width="1.7"/>
      <g stroke="#19c46e" stroke-width="2.2">
       <line x1="7.5" y1="5.5" x2="13" y2="5.5"/><line x1="7.5" y1="9.5" x2="13" y2="9.5"/><line x1="7.5" y1="13.5" x2="13" y2="13.5"/><line x1="7.5" y1="17.5" x2="13" y2="17.5"/><line x1="7.5" y1="21" x2="13" y2="21"/>
       <line x1="21" y1="5.5" x2="26.5" y2="5.5"/><line x1="21" y1="9.5" x2="26.5" y2="9.5"/><line x1="21" y1="13.5" x2="26.5" y2="13.5"/><line x1="21" y1="17.5" x2="26.5" y2="17.5"/><line x1="21" y1="21" x2="26.5" y2="21"/>
      </g></svg><div style="position:absolute;left:62px;top:98.03px;font-size:16.5px;line-height:16.5px;font-weight:400;color:#e2e2e2;white-space:nowrap;letter-spacing:0.037px;">Tổng quan</div><div style="position:absolute;left:62px;top:163.46px;font-size:16px;line-height:16px;font-weight:700;color:#17c46f;white-space:nowrap;letter-spacing:-0.172px;">Lập kế hoạch thu</div><div style="position:absolute;left:62px;top:228.03px;font-size:16.5px;line-height:16.5px;font-weight:400;color:#e2e2e2;white-space:nowrap;letter-spacing:0.111px;">Quản lý thu</div><div style="position:absolute;left:62px;top:293.03px;font-size:16.5px;line-height:16.5px;font-weight:400;color:#e2e2e2;white-space:nowrap;letter-spacing:-0.011px;">Quản lý hóa đơn</div><div style="position:absolute;left:62px;top:358.03px;font-size:16.5px;line-height:16.5px;font-weight:400;color:#e2e2e2;white-space:nowrap;letter-spacing:0.116px;">Sổ phải thu, phải trả</div><div style="position:absolute;left:62px;top:423.03px;font-size:16.5px;line-height:16.5px;font-weight:400;color:#e2e2e2;white-space:nowrap;letter-spacing:0.042px;">Báo cáo</div><div style="position:absolute;left:62px;top:488.03px;font-size:16.5px;line-height:16.5px;font-weight:400;color:#e2e2e2;white-space:nowrap;letter-spacing:0.085px;">Thanh toán KDTM</div><div style="position:absolute;left:62px;top:553.03px;font-size:16.5px;line-height:16.5px;font-weight:400;color:#e2e2e2;white-space:nowrap;letter-spacing:0.219px;">Hệ thống</div><div style="position:absolute;left:62px;top:614.03px;font-size:16.5px;line-height:16.5px;font-weight:400;color:#e2e2e2;white-space:nowrap;letter-spacing:-0.046px;">Đào tạo MISA EMIS</div><div style="position:absolute;left:205px;top:473px;width:36px;height:20px;background:#f26262;border-radius:6px;"></div><div style="position:absolute;left:205.0px;width:36px;text-align:center;top:477.42px;font-size:12.5px;line-height:12.5px;font-weight:400;color:#fff;white-space:nowrap;letter-spacing:0px;">New</div><div style="position:absolute;left:13px;top:696px;width:75px;height:75px;background:#1dbb73;border-radius:50%;"></div><svg style="position:absolute;left:13.5px;top:696.5px;overflow:visible" width="74" height="74" viewBox="0 0 74 74"><polygon points="19.70,21.80 21.23,25.70 25.41,25.95 22.17,28.60 23.23,32.65 19.70,30.40 16.17,32.65 17.23,28.60 13.99,25.95 18.17,25.70" fill="#fff" stroke="#fff" stroke-width="1" stroke-linejoin="round"/><polygon points="36.40,14.90 37.93,18.80 42.11,19.05 38.87,21.70 39.93,25.75 36.40,23.50 32.87,25.75 33.93,21.70 30.69,19.05 34.87,18.80" fill="#fff" stroke="#fff" stroke-width="1" stroke-linejoin="round"/><polygon points="53.00,21.80 54.53,25.70 58.71,25.95 55.47,28.60 56.53,32.65 53.00,30.40 49.47,32.65 50.53,28.60 47.29,25.95 51.47,25.70" fill="#fff" stroke="#fff" stroke-width="1" stroke-linejoin="round"/><rect x="22.5" y="42" width="6.3" height="16.5" rx="1.5" fill="#fff"/><path d="M30.8 42 L37.5 33 C38.8 31 41.8 31.5 41.6 34.5 L41 41 H47.5 C49.6 41 51 42.8 50.5 44.8 L48.2 55.5 C47.8 57.4 46.5 58.5 44.6 58.5 H30.8 Z" fill="#fff"/></svg><div style="position:absolute;left:14.7px;top:913px;width:226.8px;height:1px;background:#4d5566;"></div><svg style="position:absolute;left:24px;top:932px;overflow:visible" width="12" height="18" viewBox="0 0 12 18"><path d="M9.5 2 L2.5 9 L9.5 16" fill="none" stroke="#d8d8d8" stroke-width="2" stroke-linecap="round" stroke-linejoin="round"/></svg><div style="position:absolute;left:52.8px;top:932.73px;font-size:16.5px;line-height:16.5px;font-weight:400;color:#e2e2e2;white-space:nowrap;letter-spacing:0.176px;">Thu gọn</div><div style="position:absolute;left:256px;top:62px;width:1660px;height:47px;background:#f4f4f4;"></div><div style="position:absolute;left:256px;top:62px;width:1660px;height:4px;background:linear-gradient(#e6e6e6,#f4f4f4);"></div><div style="position:absolute;left:851px;top:62px;width:215px;height:47px;background:#fff;border-top:2px solid #07bc6c;box-sizing:border-box;"></div><div style="position:absolute;left:126.94999999999999px;width:400px;text-align:center;top:78.66px;font-size:16px;line-height:16px;font-weight:700;color:#c6c6c6;white-space:nowrap;letter-spacing:0px;">Quy trình</div><div style="position:absolute;left:314.85px;width:400px;text-align:center;top:78.66px;font-size:16px;line-height:16px;font-weight:700;color:#c6c6c6;white-space:nowrap;letter-spacing:0px;">Danh sách khoản thu</div><div style="position:absolute;left:541.55px;width:400px;text-align:center;top:78.66px;font-size:16px;line-height:16px;font-weight:700;color:#c6c6c6;white-space:nowrap;letter-spacing:0px;">Phụ huynh đăng ký</div><div style="position:absolute;left:758.9px;width:400px;text-align:center;top:78.66px;font-size:16px;line-height:16px;font-weight:700;color:#14b066;white-space:nowrap;letter-spacing:0px;">Đăng ký khoản thu</div><div style="position:absolute;left:985.0999999999999px;width:400px;text-align:center;top:78.66px;font-size:16px;line-height:16px;font-weight:700;color:#c6c6c6;white-space:nowrap;letter-spacing:0px;">Danh sách miễn giảm</div><div style="position:absolute;left:1270.4px;width:400px;text-align:center;top:78.66px;font-size:16px;line-height:16px;font-weight:700;color:#c6c6c6;white-space:nowrap;letter-spacing:0px;">Danh sách áp dụng chính sách giá</div><div style="position:absolute;left:271.4px;top:138.03px;font-size:16.5px;line-height:16.5px;font-weight:400;color:#1f1f1f;white-space:nowrap;letter-spacing:0.098px;">Xem theo:</div><div style="position:absolute;left:363.5px;top:135.5px;width:22.0px;height:22.0px;border:1.5px solid #c8c8c8;border-radius:50%;box-sizing:border-box;background:#fff;"></div><div style="position:absolute;left:391.8px;top:138.03px;font-size:16.5px;line-height:16.5px;font-weight:400;color:#333;white-space:nowrap;letter-spacing:-0.147px;">Toàn trường</div><div style="position:absolute;left:513.5px;top:135.5px;width:22.0px;height:22.0px;border:1.5px solid #c8c8c8;border-radius:50%;box-sizing:border-box;background:#fff;"></div><div style="position:absolute;left:519.0px;top:141.0px;width:11.0px;height:11.0px;background:#07bc6c;border-radius:50%;"></div><div style="position:absolute;left:541.4px;top:138.03px;font-size:16.5px;line-height:16.5px;font-weight:400;color:#333;white-space:nowrap;letter-spacing:0.187px;">Chi tiết học sinh</div><div style="position:absolute;left:692px;top:134.73px;font-size:16.5px;line-height:16.5px;font-weight:400;color:#2b7be6;white-space:nowrap;letter-spacing:-0.244px;">Xem hướng dẫn</div><div style="position:absolute;left:710px;top:149.2px;width:1.5px;height:1.6000000000000227px;background:#111;"></div><div style="position:absolute;left:725.9px;top:149.2px;width:3.2000000000000455px;height:1.6000000000000227px;background:#111;"></div><div style="position:absolute;left:738.7px;top:149.2px;width:1.5px;height:1.6000000000000227px;background:#111;"></div><div style="position:absolute;left:749px;top:149.2px;width:1.5px;height:1.6000000000000227px;background:#111;"></div><div style="position:absolute;left:755.8px;top:149.2px;width:2.2000000000000455px;height:1.6000000000000227px;background:#111;"></div><div style="position:absolute;left:767.7px;top:149.2px;width:1.5px;height:1.6000000000000227px;background:#111;"></div><div style="position:absolute;left:778px;top:149.2px;width:5px;height:1.6000000000000227px;background:#111;"></div><div style="position:absolute;left:1471px;top:123px;width:123.70000000000005px;height:39.69999999999999px;background:#07bc6c;border-radius:6px;"></div><div style="position:absolute;left:1471.0px;width:124px;text-align:center;top:135.03px;font-size:16.5px;line-height:16.5px;font-weight:400;color:#fff;white-space:nowrap;letter-spacing:0.2px;">Nhập khẩu</div><div style="position:absolute;left:1605px;top:123px;width:119.70000000000005px;height:39.69999999999999px;background:#07bc6c;border-radius:6px;"></div><div style="position:absolute;left:1603.0px;width:124px;text-align:center;top:135.03px;font-size:16.5px;line-height:16.5px;font-weight:400;color:#fff;white-space:nowrap;letter-spacing:0.2px;">Xuất khẩu</div><div style="position:absolute;left:1735.2px;top:123px;width:119.39999999999986px;height:39.69999999999999px;background:#fff;border:1px solid #dadada;border-radius:6px;box-sizing:border-box;"></div><div style="position:absolute;left:1733.0px;width:124px;text-align:center;top:135.03px;font-size:16.5px;line-height:16.5px;font-weight:400;color:#2f2f4f;white-space:nowrap;letter-spacing:0.2px;">Sao chép</div><div style="position:absolute;left:1864.8px;top:123px;width:39.700000000000045px;height:39.69999999999999px;background:#fff;border:1px solid #dadada;border-radius:6px;box-sizing:border-box;"></div><svg style="position:absolute;left:1873px;top:131px;overflow:visible" width="24" height="24" viewBox="0 0 24 24"><path d="M6.5 8 V3.5 H17.5 V8" fill="none" stroke="#505562" stroke-width="2"/><rect x="2.5" y="8" width="19" height="9.5" rx="2.5" fill="none" stroke="#505562" stroke-width="2.2"/><rect x="7" y="13.5" width="10" height="8" rx="1" fill="#fff" stroke="#505562" stroke-width="2"/><line x1="9.5" y1="16.5" x2="14.5" y2="16.5" stroke="#505562" stroke-width="1.4"/><line x1="9.5" y1="19" x2="14.5" y2="19" stroke="#505562" stroke-width="1.4"/><circle cx="18" cy="11" r="0.9" fill="#505562"/></svg><div style="position:absolute;left:271.7px;top:184.03px;font-size:16.5px;line-height:16.5px;font-weight:400;color:#3f3f3f;white-space:nowrap;letter-spacing:-0.035px;">Phạm vi</div><div style="position:absolute;left:276.4px;top:210px;width:324.4px;height:38.5px;background:#fff;border:1px solid #dcdcdc;border-radius:6px;box-sizing:border-box;"></div><div style="position:absolute;left:290px;top:221.53px;font-size:16.5px;line-height:16.5px;font-weight:400;color:#1f1f1f;white-space:nowrap;letter-spacing:0px;">2B</div><svg style="position:absolute;left:577.5px;top:226.75px;overflow:visible" width="11" height="5.5" viewBox="0 0 11 5.5"><path d="M1 1 L5.5 5.0 L10 1" fill="none" stroke="#4f4f6b" stroke-width="2" stroke-linecap="round" stroke-linejoin="round"/></svg><div style="position:absolute;left:272.2px;top:275.03px;font-size:16.5px;line-height:16.5px;font-weight:400;color:#3f3f3f;white-space:nowrap;letter-spacing:0.035px;">Trạng thái</div><div style="position:absolute;left:276.4px;top:310.2px;width:22.0px;height:22.0px;border:1.5px solid #c8c8c8;border-radius:50%;box-sizing:border-box;background:#fff;"></div><div style="position:absolute;left:281.9px;top:315.7px;width:11.0px;height:11.0px;background:#07bc6c;border-radius:50%;"></div><div style="position:absolute;left:304.4px;top:313.23px;font-size:16.5px;line-height:16.5px;font-weight:400;color:#333;white-space:nowrap;letter-spacing:0.15px;">Tất cả</div><div style="position:absolute;left:276.4px;top:350.2px;width:22.0px;height:22.0px;border:1.5px solid #c8c8c8;border-radius:50%;box-sizing:border-box;background:#fff;"></div><div style="position:absolute;left:304.4px;top:353.23px;font-size:16.5px;line-height:16.5px;font-weight:400;color:#333;white-space:nowrap;letter-spacing:0.15px;">Học sinh chưa đăng ký</div><div style="position:absolute;left:276.4px;top:390.2px;width:22.0px;height:22.0px;border:1.5px solid #c8c8c8;border-radius:50%;box-sizing:border-box;background:#fff;"></div><div style="position:absolute;left:304.4px;top:393.23px;font-size:16.5px;line-height:16.5px;font-weight:400;color:#333;white-space:nowrap;letter-spacing:0.15px;">Học sinh đã đăng ký</div><div style="position:absolute;left:271.7px;top:438.03px;font-size:16.5px;line-height:16.5px;font-weight:400;color:#1f1f1f;white-space:nowrap;letter-spacing:0.074px;">Khoản thu (<span style="color:#2b7be6">SL đăng ký toàn trường</span>)</div><div style="position:absolute;left:276.0px;top:480.0px;width:23.0px;height:23.0px;background:#07bc6c;border-radius:5px;"></div><svg style="position:absolute;left:276.0px;top:480.0px;overflow:visible" width="23" height="23" viewBox="0 0 23 23"><path d="M6.3 11.1 L10 14.6 L16.7 7.8" fill="none" stroke="#fff" stroke-width="2" stroke-linecap="round" stroke-linejoin="round"/></svg><div style="position:absolute;left:304.4px;top:482.13px;font-size:16.5px;line-height:16.5px;font-weight:400;color:#333;white-space:nowrap;letter-spacing:0.1px;">Tất cả</div><div style="position:absolute;left:276.0px;top:520.0px;width:23.0px;height:23.0px;background:#07bc6c;border-radius:5px;"></div><svg style="position:absolute;left:276.0px;top:520.0px;overflow:visible" width="23" height="23" viewBox="0 0 23 23"><path d="M6.3 11.1 L10 14.6 L16.7 7.8" fill="none" stroke="#fff" stroke-width="2" stroke-linecap="round" stroke-linejoin="round"/></svg><div style="position:absolute;left:304.4px;top:522.13px;font-size:16.5px;line-height:16.5px;font-weight:400;color:#333;white-space:nowrap;letter-spacing:0.1px;">Sổ liên lạc điện tử <b>(0/22)</b></div><div style="position:absolute;left:276.0px;top:560.0px;width:23.0px;height:23.0px;background:#07bc6c;border-radius:5px;"></div><svg style="position:absolute;left:276.0px;top:560.0px;overflow:visible" width="23" height="23" viewBox="0 0 23 23"><path d="M6.3 11.1 L10 14.6 L16.7 7.8" fill="none" stroke="#fff" stroke-width="2" stroke-linecap="round" stroke-linejoin="round"/></svg><div style="position:absolute;left:304.4px;top:562.13px;font-size:16.5px;line-height:16.5px;font-weight:400;color:#333;white-space:nowrap;letter-spacing:0.1px;">Sữa học đường <b>(0/22)</b></div><div style="position:absolute;left:276.0px;top:600.0px;width:23.0px;height:23.0px;background:#07bc6c;border-radius:5px;"></div><svg style="position:absolute;left:276.0px;top:600.0px;overflow:visible" width="23" height="23" viewBox="0 0 23 23"><path d="M6.3 11.1 L10 14.6 L16.7 7.8" fill="none" stroke="#fff" stroke-width="2" stroke-linecap="round" stroke-linejoin="round"/></svg><div style="position:absolute;left:304.4px;top:602.13px;font-size:16.5px;line-height:16.5px;font-weight:400;color:#333;white-space:nowrap;letter-spacing:0.1px;">Tiền ăn bán trú <b>(0/22)</b></div><div style="position:absolute;left:276.0px;top:640.0px;width:23.0px;height:23.0px;background:#07bc6c;border-radius:5px;"></div><svg style="position:absolute;left:276.0px;top:640.0px;overflow:visible" width="23" height="23" viewBox="0 0 23 23"><path d="M6.3 11.1 L10 14.6 L16.7 7.8" fill="none" stroke="#fff" stroke-width="2" stroke-linecap="round" stroke-linejoin="round"/></svg><div style="position:absolute;left:304.4px;top:642.13px;font-size:16.5px;line-height:16.5px;font-weight:400;color:#333;white-space:nowrap;letter-spacing:0.1px;">Bảo hiểm y tế <b>(0/22)</b></div><div style="position:absolute;left:276.0px;top:680.0px;width:23.0px;height:23.0px;background:#07bc6c;border-radius:5px;"></div><svg style="position:absolute;left:276.0px;top:680.0px;overflow:visible" width="23" height="23" viewBox="0 0 23 23"><path d="M6.3 11.1 L10 14.6 L16.7 7.8" fill="none" stroke="#fff" stroke-width="2" stroke-linecap="round" stroke-linejoin="round"/></svg><div style="position:absolute;left:304.4px;top:682.13px;font-size:16.5px;line-height:16.5px;font-weight:400;color:#333;white-space:nowrap;letter-spacing:0.1px;">Đồng phục <b>(0/22)</b></div><div style="position:absolute;left:276.0px;top:720.0px;width:23.0px;height:23.0px;background:#07bc6c;border-radius:5px;"></div><svg style="position:absolute;left:276.0px;top:720.0px;overflow:visible" width="23" height="23" viewBox="0 0 23 23"><path d="M6.3 11.1 L10 14.6 L16.7 7.8" fill="none" stroke="#fff" stroke-width="2" stroke-linecap="round" stroke-linejoin="round"/></svg><div style="position:absolute;left:304.4px;top:722.13px;font-size:16.5px;line-height:16.5px;font-weight:400;color:#333;white-space:nowrap;letter-spacing:0.1px;">Học múa <b>(0/22)</b></div><div style="position:absolute;left:276.0px;top:760.0px;width:23.0px;height:23.0px;background:#07bc6c;border-radius:5px;"></div><svg style="position:absolute;left:276.0px;top:760.0px;overflow:visible" width="23" height="23" viewBox="0 0 23 23"><path d="M6.3 11.1 L10 14.6 L16.7 7.8" fill="none" stroke="#fff" stroke-width="2" stroke-linecap="round" stroke-linejoin="round"/></svg><div style="position:absolute;left:304.4px;top:762.13px;font-size:16.5px;line-height:16.5px;font-weight:400;color:#333;white-space:nowrap;letter-spacing:0.1px;">Khoản test <b>(0/22)</b></div><div style="position:absolute;left:596px;top:470.5px;width:10px;height:449.5px;background:#ececec;border-radius:5px;"></div><div style="position:absolute;left:596px;top:470.5px;width:10px;height:418.20000000000005px;background:#a9a9a9;border-radius:5px;"></div><div style="position:absolute;left:606px;top:538px;width:13px;height:48px;background:#07bc6c;border-radius:6px 0 0 6px;"></div><svg style="position:absolute;left:606px;top:538px;overflow:visible" width="14" height="48" viewBox="0 0 14 48"><path d="M10.7 17.6 L3.3 23.8 L10.7 30 Z" fill="#fff"/></svg><div style="position:absolute;left:620px;top:181px;width:1px;height:787px;background:#eceef4;"></div><div style="position:absolute;left:0;top:0;width:1916px;height:854px;overflow:hidden"><div style="position:absolute;left:636.4px;top:283px;width:500.6px;height:43px;background:#ffffff;"></div><div style="position:absolute;left:636.4px;top:325px;width:500.6px;height:43px;background:#f4f5fa;"></div><div style="position:absolute;left:636.4px;top:367px;width:500.6px;height:43px;background:#ffffff;"></div><div style="position:absolute;left:636.4px;top:409px;width:500.6px;height:43px;background:#f4f5fa;"></div><div style="position:absolute;left:636.4px;top:451px;width:500.6px;height:43px;background:#cce7fb;"></div><div style="position:absolute;left:636.4px;top:493px;width:500.6px;height:43px;background:#f4f5fa;"></div><div style="position:absolute;left:636.4px;top:535px;width:500.6px;height:43px;background:#ffffff;"></div><div style="position:absolute;left:636.4px;top:577px;width:500.6px;height:43px;background:#f4f5fa;"></div><div style="position:absolute;left:636.4px;top:619px;width:500.6px;height:43px;background:#ffffff;"></div><div style="position:absolute;left:636.4px;top:661px;width:500.6px;height:43px;background:#f4f5fa;"></div><div style="position:absolute;left:636.4px;top:703px;width:500.6px;height:43px;background:#ffffff;"></div><div style="position:absolute;left:636.4px;top:745px;width:500.6px;height:43px;background:#f4f5fa;"></div><div style="position:absolute;left:636.4px;top:787px;width:500.6px;height:43px;background:#ffffff;"></div><div style="position:absolute;left:636.4px;top:829px;width:500.6px;height:43px;background:#f4f5fa;"></div><div style="position:absolute;left:1139px;top:283px;width:757px;height:43px;background:#ffffff;"></div><div style="position:absolute;left:1139px;top:325px;width:757px;height:44px;background:#f4f5fa;"></div><div style="position:absolute;left:1139px;top:368px;width:757px;height:43px;background:#ffffff;"></div><div style="position:absolute;left:1139px;top:410px;width:757px;height:43px;background:#f4f5fa;"></div><div style="position:absolute;left:1139px;top:452px;width:757px;height:44px;background:#cce7fb;"></div><div style="position:absolute;left:1139px;top:495px;width:757px;height:43px;background:#f4f5fa;"></div><div style="position:absolute;left:1139px;top:537px;width:757px;height:43px;background:#ffffff;"></div><div style="position:absolute;left:1139px;top:579px;width:757px;height:43px;background:#f4f5fa;"></div><div style="position:absolute;left:1139px;top:621px;width:757px;height:44px;background:#ffffff;"></div><div style="position:absolute;left:1139px;top:664px;width:757px;height:43px;background:#f4f5fa;"></div><div style="position:absolute;left:1139px;top:706px;width:757px;height:43px;background:#ffffff;"></div><div style="position:absolute;left:1139px;top:748px;width:757px;height:44px;background:#f4f5fa;"></div><div style="position:absolute;left:1139px;top:791px;width:757px;height:43px;background:#ffffff;"></div><div style="position:absolute;left:1139px;top:833px;width:757px;height:43px;background:#f4f5fa;"></div><div style="position:absolute;left:636.4px;top:324px;width:500.6px;height:2px;background:#d0d4e4;"></div><div style="position:absolute;left:637.5px;width:60px;text-align:center;top:295.53px;font-size:16.5px;line-height:16.5px;font-weight:400;color:#3a3a3a;white-space:nowrap;letter-spacing:0px;">1</div><div style="position:absolute;left:713px;top:295.53px;font-size:16.5px;line-height:16.5px;font-weight:400;color:#3a3a3a;white-space:nowrap;letter-spacing:0.05px;">Phan Văn Long</div><div style="position:absolute;left:636.4px;top:366px;width:500.6px;height:2px;background:#d0d4e4;"></div><div style="position:absolute;left:637.5px;width:60px;text-align:center;top:337.53px;font-size:16.5px;line-height:16.5px;font-weight:400;color:#3a3a3a;white-space:nowrap;letter-spacing:0px;">2</div><div style="position:absolute;left:713px;top:337.53px;font-size:16.5px;line-height:16.5px;font-weight:400;color:#3a3a3a;white-space:nowrap;letter-spacing:0.05px;">Huỳnh Ngọc Linh</div><div style="position:absolute;left:636.4px;top:408px;width:500.6px;height:2px;background:#d0d4e4;"></div><div style="position:absolute;left:637.5px;width:60px;text-align:center;top:379.53px;font-size:16.5px;line-height:16.5px;font-weight:400;color:#3a3a3a;white-space:nowrap;letter-spacing:0px;">3</div><div style="position:absolute;left:713px;top:379.53px;font-size:16.5px;line-height:16.5px;font-weight:400;color:#3a3a3a;white-space:nowrap;letter-spacing:0.05px;">Vũ Anh Duy</div><div style="position:absolute;left:636.4px;top:450px;width:500.6px;height:2px;background:#d0d4e4;"></div><div style="position:absolute;left:637.5px;width:60px;text-align:center;top:421.53px;font-size:16.5px;line-height:16.5px;font-weight:400;color:#3a3a3a;white-space:nowrap;letter-spacing:0px;">4</div><div style="position:absolute;left:713px;top:421.53px;font-size:16.5px;line-height:16.5px;font-weight:400;color:#3a3a3a;white-space:nowrap;letter-spacing:0.05px;">Nguyễn Minh Linh</div><div style="position:absolute;left:636.4px;top:492px;width:500.6px;height:2px;background:#d0d4e4;"></div><div style="position:absolute;left:637.5px;width:60px;text-align:center;top:463.53px;font-size:16.5px;line-height:16.5px;font-weight:400;color:#3a3a3a;white-space:nowrap;letter-spacing:0px;">5</div><div style="position:absolute;left:713px;top:463.53px;font-size:16.5px;line-height:16.5px;font-weight:400;color:#3a3a3a;white-space:nowrap;letter-spacing:0.05px;">Lê Văn Long</div><div style="position:absolute;left:636.4px;top:534px;width:500.6px;height:2px;background:#d0d4e4;"></div><div style="position:absolute;left:637.5px;width:60px;text-align:center;top:505.53px;font-size:16.5px;line-height:16.5px;font-weight:400;color:#3a3a3a;white-space:nowrap;letter-spacing:0px;">6</div><div style="position:absolute;left:713px;top:505.53px;font-size:16.5px;line-height:16.5px;font-weight:400;color:#3a3a3a;white-space:nowrap;letter-spacing:0.05px;">Võ Quang Quân</div><div style="position:absolute;left:636.4px;top:576px;width:500.6px;height:2px;background:#d0d4e4;"></div><div style="position:absolute;left:637.5px;width:60px;text-align:center;top:547.53px;font-size:16.5px;line-height:16.5px;font-weight:400;color:#3a3a3a;white-space:nowrap;letter-spacing:0px;">7</div><div style="position:absolute;left:713px;top:547.53px;font-size:16.5px;line-height:16.5px;font-weight:400;color:#3a3a3a;white-space:nowrap;letter-spacing:0.05px;">Lê Thanh Mai</div><div style="position:absolute;left:636.4px;top:618px;width:500.6px;height:2px;background:#d0d4e4;"></div><div style="position:absolute;left:637.5px;width:60px;text-align:center;top:589.53px;font-size:16.5px;line-height:16.5px;font-weight:400;color:#3a3a3a;white-space:nowrap;letter-spacing:0px;">8</div><div style="position:absolute;left:713px;top:589.53px;font-size:16.5px;line-height:16.5px;font-weight:400;color:#3a3a3a;white-space:nowrap;letter-spacing:0.05px;">Đặng Ngọc Linh</div><div style="position:absolute;left:636.4px;top:660px;width:500.6px;height:2px;background:#d0d4e4;"></div><div style="position:absolute;left:637.5px;width:60px;text-align:center;top:631.53px;font-size:16.5px;line-height:16.5px;font-weight:400;color:#3a3a3a;white-space:nowrap;letter-spacing:0px;">9</div><div style="position:absolute;left:713px;top:631.53px;font-size:16.5px;line-height:16.5px;font-weight:400;color:#3a3a3a;white-space:nowrap;letter-spacing:0.05px;">Lê Hữu Hưng</div><div style="position:absolute;left:636.4px;top:702px;width:500.6px;height:2px;background:#d0d4e4;"></div><div style="position:absolute;left:637.5px;width:60px;text-align:center;top:673.53px;font-size:16.5px;line-height:16.5px;font-weight:400;color:#3a3a3a;white-space:nowrap;letter-spacing:0px;">10</div><div style="position:absolute;left:713px;top:673.53px;font-size:16.5px;line-height:16.5px;font-weight:400;color:#3a3a3a;white-space:nowrap;letter-spacing:0.05px;">Huỳnh Gia Duy</div><div style="position:absolute;left:636.4px;top:744px;width:500.6px;height:2px;background:#d0d4e4;"></div><div style="position:absolute;left:637.5px;width:60px;text-align:center;top:715.53px;font-size:16.5px;line-height:16.5px;font-weight:400;color:#3a3a3a;white-space:nowrap;letter-spacing:0px;">11</div><div style="position:absolute;left:713px;top:715.53px;font-size:16.5px;line-height:16.5px;font-weight:400;color:#3a3a3a;white-space:nowrap;letter-spacing:0.05px;">Phạm Văn Long</div><div style="position:absolute;left:636.4px;top:786px;width:500.6px;height:2px;background:#d0d4e4;"></div><div style="position:absolute;left:637.5px;width:60px;text-align:center;top:757.53px;font-size:16.5px;line-height:16.5px;font-weight:400;color:#3a3a3a;white-space:nowrap;letter-spacing:0px;">12</div><div style="position:absolute;left:713px;top:757.53px;font-size:16.5px;line-height:16.5px;font-weight:400;color:#3a3a3a;white-space:nowrap;letter-spacing:0.05px;">Huỳnh Ngọc Tú</div><div style="position:absolute;left:636.4px;top:828px;width:500.6px;height:2px;background:#d0d4e4;"></div><div style="position:absolute;left:637.5px;width:60px;text-align:center;top:799.53px;font-size:16.5px;line-height:16.5px;font-weight:400;color:#3a3a3a;white-space:nowrap;letter-spacing:0px;">13</div><div style="position:absolute;left:713px;top:799.53px;font-size:16.5px;line-height:16.5px;font-weight:400;color:#3a3a3a;white-space:nowrap;letter-spacing:0.05px;">Lê Ngọc Hải</div><div style="position:absolute;left:636.4px;top:870px;width:500.6px;height:2px;background:#d0d4e4;"></div><div style="position:absolute;left:637.5px;width:60px;text-align:center;top:841.53px;font-size:16.5px;line-height:16.5px;font-weight:400;color:#3a3a3a;white-space:nowrap;letter-spacing:0px;">14</div><div style="position:absolute;left:713px;top:841.53px;font-size:16.5px;line-height:16.5px;font-weight:400;color:#3a3a3a;white-space:nowrap;letter-spacing:0.05px;">Vũ Bảo Long</div><div style="position:absolute;left:1139px;top:324px;width:757px;height:2px;background:#d0d4e4;"></div><div style="position:absolute;left:1189.0px;top:293.4px;width:22.0px;height:22.0px;background:#fff;border:1px solid #c9c9c9;border-radius:5px;box-sizing:border-box;"></div><div style="position:absolute;left:1314.0px;top:293.4px;width:22.0px;height:22.0px;background:#fff;border:1px solid #c9c9c9;border-radius:5px;box-sizing:border-box;"></div><div style="position:absolute;left:1439.0px;top:293.4px;width:22.0px;height:22.0px;background:#fff;border:1px solid #c9c9c9;border-radius:5px;box-sizing:border-box;"></div><div style="position:absolute;left:1564.0px;top:293.4px;width:22.0px;height:22.0px;background:#fff;border:1px solid #c9c9c9;border-radius:5px;box-sizing:border-box;"></div><div style="position:absolute;left:1689.0px;top:293.4px;width:22.0px;height:22.0px;background:#fff;border:1px solid #c9c9c9;border-radius:5px;box-sizing:border-box;"></div><div style="position:absolute;left:1814.0px;top:293.4px;width:22.0px;height:22.0px;background:#fff;border:1px solid #c9c9c9;border-radius:5px;box-sizing:border-box;"></div><div style="position:absolute;left:1139px;top:367px;width:757px;height:2px;background:#d0d4e4;"></div><div style="position:absolute;left:1189.0px;top:335.9px;width:22.0px;height:22.0px;background:#fff;border:1px solid #c9c9c9;border-radius:5px;box-sizing:border-box;"></div><div style="position:absolute;left:1314.0px;top:335.9px;width:22.0px;height:22.0px;background:#fff;border:1px solid #c9c9c9;border-radius:5px;box-sizing:border-box;"></div><div style="position:absolute;left:1439.0px;top:335.9px;width:22.0px;height:22.0px;background:#fff;border:1px solid #c9c9c9;border-radius:5px;box-sizing:border-box;"></div><div style="position:absolute;left:1564.0px;top:335.9px;width:22.0px;height:22.0px;background:#fff;border:1px solid #c9c9c9;border-radius:5px;box-sizing:border-box;"></div><div style="position:absolute;left:1689.0px;top:335.9px;width:22.0px;height:22.0px;background:#fff;border:1px solid #c9c9c9;border-radius:5px;box-sizing:border-box;"></div><div style="position:absolute;left:1814.0px;top:335.9px;width:22.0px;height:22.0px;background:#fff;border:1px solid #c9c9c9;border-radius:5px;box-sizing:border-box;"></div><div style="position:absolute;left:1139px;top:409px;width:757px;height:2px;background:#d0d4e4;"></div><div style="position:absolute;left:1189.0px;top:378.4px;width:22.0px;height:22.0px;background:#fff;border:1px solid #c9c9c9;border-radius:5px;box-sizing:border-box;"></div><div style="position:absolute;left:1314.0px;top:378.4px;width:22.0px;height:22.0px;background:#fff;border:1px solid #c9c9c9;border-radius:5px;box-sizing:border-box;"></div><div style="position:absolute;left:1439.0px;top:378.4px;width:22.0px;height:22.0px;background:#fff;border:1px solid #c9c9c9;border-radius:5px;box-sizing:border-box;"></div><div style="position:absolute;left:1564.0px;top:378.4px;width:22.0px;height:22.0px;background:#fff;border:1px solid #c9c9c9;border-radius:5px;box-sizing:border-box;"></div><div style="position:absolute;left:1689.0px;top:378.4px;width:22.0px;height:22.0px;background:#fff;border:1px solid #c9c9c9;border-radius:5px;box-sizing:border-box;"></div><div style="position:absolute;left:1814.0px;top:378.4px;width:22.0px;height:22.0px;background:#fff;border:1px solid #c9c9c9;border-radius:5px;box-sizing:border-box;"></div><div style="position:absolute;left:1139px;top:451px;width:757px;height:2px;background:#d0d4e4;"></div><div style="position:absolute;left:1189.0px;top:420.4px;width:22.0px;height:22.0px;background:#fff;border:1px solid #c9c9c9;border-radius:5px;box-sizing:border-box;"></div><div style="position:absolute;left:1314.0px;top:420.4px;width:22.0px;height:22.0px;background:#fff;border:1px solid #c9c9c9;border-radius:5px;box-sizing:border-box;"></div><div style="position:absolute;left:1439.0px;top:420.4px;width:22.0px;height:22.0px;background:#fff;border:1px solid #c9c9c9;border-radius:5px;box-sizing:border-box;"></div><div style="position:absolute;left:1564.0px;top:420.4px;width:22.0px;height:22.0px;background:#fff;border:1px solid #c9c9c9;border-radius:5px;box-sizing:border-box;"></div><div style="position:absolute;left:1689.0px;top:420.4px;width:22.0px;height:22.0px;background:#fff;border:1px solid #c9c9c9;border-radius:5px;box-sizing:border-box;"></div><div style="position:absolute;left:1814.0px;top:420.4px;width:22.0px;height:22.0px;background:#fff;border:1px solid #c9c9c9;border-radius:5px;box-sizing:border-box;"></div><div style="position:absolute;left:1139px;top:494px;width:757px;height:2px;background:#d0d4e4;"></div><div style="position:absolute;left:1189.0px;top:462.9px;width:22.0px;height:22.0px;background:#07bc6c;border-radius:5px;"></div><svg style="position:absolute;left:1189.0px;top:462.9px;overflow:visible" width="22" height="22" viewBox="0 0 22 22"><path d="M6.3 11.1 L10 14.6 L16.7 7.8" fill="none" stroke="#fff" stroke-width="2" stroke-linecap="round" stroke-linejoin="round"/></svg><div style="position:absolute;left:1314.0px;top:462.9px;width:22.0px;height:22.0px;background:#fff;border:1px solid #c9c9c9;border-radius:5px;box-sizing:border-box;"></div><div style="position:absolute;left:1439.0px;top:462.9px;width:22.0px;height:22.0px;background:#fff;border:1px solid #c9c9c9;border-radius:5px;box-sizing:border-box;"></div><div style="position:absolute;left:1564.0px;top:462.9px;width:22.0px;height:22.0px;background:#fff;border:1px solid #c9c9c9;border-radius:5px;box-sizing:border-box;"></div><div style="position:absolute;left:1689.0px;top:462.9px;width:22.0px;height:22.0px;background:#fff;border:1px solid #c9c9c9;border-radius:5px;box-sizing:border-box;"></div><div style="position:absolute;left:1814.0px;top:462.9px;width:22.0px;height:22.0px;background:#07bc6c;border-radius:5px;"></div><svg style="position:absolute;left:1814.0px;top:462.9px;overflow:visible" width="22" height="22" viewBox="0 0 22 22"><path d="M6.3 11.1 L10 14.6 L16.7 7.8" fill="none" stroke="#fff" stroke-width="2" stroke-linecap="round" stroke-linejoin="round"/></svg><div style="position:absolute;left:1139px;top:536px;width:757px;height:2px;background:#d0d4e4;"></div><div style="position:absolute;left:1189.0px;top:505.4px;width:22.0px;height:22.0px;background:#fff;border:1px solid #c9c9c9;border-radius:5px;box-sizing:border-box;"></div><div style="position:absolute;left:1314.0px;top:505.4px;width:22.0px;height:22.0px;background:#fff;border:1px solid #c9c9c9;border-radius:5px;box-sizing:border-box;"></div><div style="position:absolute;left:1439.0px;top:505.4px;width:22.0px;height:22.0px;background:#fff;border:1px solid #c9c9c9;border-radius:5px;box-sizing:border-box;"></div><div style="position:absolute;left:1564.0px;top:505.4px;width:22.0px;height:22.0px;background:#fff;border:1px solid #c9c9c9;border-radius:5px;box-sizing:border-box;"></div><div style="position:absolute;left:1689.0px;top:505.4px;width:22.0px;height:22.0px;background:#fff;border:1px solid #c9c9c9;border-radius:5px;box-sizing:border-box;"></div><div style="position:absolute;left:1814.0px;top:505.4px;width:22.0px;height:22.0px;background:#fff;border:1px solid #c9c9c9;border-radius:5px;box-sizing:border-box;"></div><div style="position:absolute;left:1139px;top:578px;width:757px;height:2px;background:#d0d4e4;"></div><div style="position:absolute;left:1189.0px;top:547.4px;width:22.0px;height:22.0px;background:#fff;border:1px solid #c9c9c9;border-radius:5px;box-sizing:border-box;"></div><div style="position:absolute;left:1314.0px;top:547.4px;width:22.0px;height:22.0px;background:#fff;border:1px solid #c9c9c9;border-radius:5px;box-sizing:border-box;"></div><div style="position:absolute;left:1439.0px;top:547.4px;width:22.0px;height:22.0px;background:#fff;border:1px solid #c9c9c9;border-radius:5px;box-sizing:border-box;"></div><div style="position:absolute;left:1564.0px;top:547.4px;width:22.0px;height:22.0px;background:#fff;border:1px solid #c9c9c9;border-radius:5px;box-sizing:border-box;"></div><div style="position:absolute;left:1689.0px;top:547.4px;width:22.0px;height:22.0px;background:#fff;border:1px solid #c9c9c9;border-radius:5px;box-sizing:border-box;"></div><div style="position:absolute;left:1814.0px;top:547.4px;width:22.0px;height:22.0px;background:#fff;border:1px solid #c9c9c9;border-radius:5px;box-sizing:border-box;"></div><div style="position:absolute;left:1139px;top:620px;width:757px;height:2px;background:#d0d4e4;"></div><div style="position:absolute;left:1189.0px;top:589.4px;width:22.0px;height:22.0px;background:#fff;border:1px solid #c9c9c9;border-radius:5px;box-sizing:border-box;"></div><div style="position:absolute;left:1314.0px;top:589.4px;width:22.0px;height:22.0px;background:#fff;border:1px solid #c9c9c9;border-radius:5px;box-sizing:border-box;"></div><div style="position:absolute;left:1439.0px;top:589.4px;width:22.0px;height:22.0px;background:#fff;border:1px solid #c9c9c9;border-radius:5px;box-sizing:border-box;"></div><div style="position:absolute;left:1564.0px;top:589.4px;width:22.0px;height:22.0px;background:#fff;border:1px solid #c9c9c9;border-radius:5px;box-sizing:border-box;"></div><div style="position:absolute;left:1689.0px;top:589.4px;width:22.0px;height:22.0px;background:#fff;border:1px solid #c9c9c9;border-radius:5px;box-sizing:border-box;"></div><div style="position:absolute;left:1814.0px;top:589.4px;width:22.0px;height:22.0px;background:#fff;border:1px solid #c9c9c9;border-radius:5px;box-sizing:border-box;"></div><div style="position:absolute;left:1139px;top:663px;width:757px;height:2px;background:#d0d4e4;"></div><div style="position:absolute;left:1189.0px;top:631.9px;width:22.0px;height:22.0px;background:#fff;border:1px solid #c9c9c9;border-radius:5px;box-sizing:border-box;"></div><div style="position:absolute;left:1314.0px;top:631.9px;width:22.0px;height:22.0px;background:#fff;border:1px solid #c9c9c9;border-radius:5px;box-sizing:border-box;"></div><div style="position:absolute;left:1439.0px;top:631.9px;width:22.0px;height:22.0px;background:#fff;border:1px solid #c9c9c9;border-radius:5px;box-sizing:border-box;"></div><div style="position:absolute;left:1564.0px;top:631.9px;width:22.0px;height:22.0px;background:#fff;border:1px solid #c9c9c9;border-radius:5px;box-sizing:border-box;"></div><div style="position:absolute;left:1689.0px;top:631.9px;width:22.0px;height:22.0px;background:#fff;border:1px solid #c9c9c9;border-radius:5px;box-sizing:border-box;"></div><div style="position:absolute;left:1814.0px;top:631.9px;width:22.0px;height:22.0px;background:#fff;border:1px solid #c9c9c9;border-radius:5px;box-sizing:border-box;"></div><div style="position:absolute;left:1139px;top:705px;width:757px;height:2px;background:#d0d4e4;"></div><div style="position:absolute;left:1189.0px;top:674.4px;width:22.0px;height:22.0px;background:#fff;border:1px solid #c9c9c9;border-radius:5px;box-sizing:border-box;"></div><div style="position:absolute;left:1314.0px;top:674.4px;width:22.0px;height:22.0px;background:#fff;border:1px solid #c9c9c9;border-radius:5px;box-sizing:border-box;"></div><div style="position:absolute;left:1439.0px;top:674.4px;width:22.0px;height:22.0px;background:#fff;border:1px solid #c9c9c9;border-radius:5px;box-sizing:border-box;"></div><div style="position:absolute;left:1564.0px;top:674.4px;width:22.0px;height:22.0px;background:#fff;border:1px solid #c9c9c9;border-radius:5px;box-sizing:border-box;"></div><div style="position:absolute;left:1689.0px;top:674.4px;width:22.0px;height:22.0px;background:#fff;border:1px solid #c9c9c9;border-radius:5px;box-sizing:border-box;"></div><div style="position:absolute;left:1814.0px;top:674.4px;width:22.0px;height:22.0px;background:#fff;border:1px solid #c9c9c9;border-radius:5px;box-sizing:border-box;"></div><div style="position:absolute;left:1139px;top:747px;width:757px;height:2px;background:#d0d4e4;"></div><div style="position:absolute;left:1189.0px;top:716.4px;width:22.0px;height:22.0px;background:#fff;border:1px solid #c9c9c9;border-radius:5px;box-sizing:border-box;"></div><div style="position:absolute;left:1314.0px;top:716.4px;width:22.0px;height:22.0px;background:#fff;border:1px solid #c9c9c9;border-radius:5px;box-sizing:border-box;"></div><div style="position:absolute;left:1439.0px;top:716.4px;width:22.0px;height:22.0px;background:#fff;border:1px solid #c9c9c9;border-radius:5px;box-sizing:border-box;"></div><div style="position:absolute;left:1564.0px;top:716.4px;width:22.0px;height:22.0px;background:#fff;border:1px solid #c9c9c9;border-radius:5px;box-sizing:border-box;"></div><div style="position:absolute;left:1689.0px;top:716.4px;width:22.0px;height:22.0px;background:#fff;border:1px solid #c9c9c9;border-radius:5px;box-sizing:border-box;"></div><div style="position:absolute;left:1814.0px;top:716.4px;width:22.0px;height:22.0px;background:#fff;border:1px solid #c9c9c9;border-radius:5px;box-sizing:border-box;"></div><div style="position:absolute;left:1139px;top:790px;width:757px;height:2px;background:#d0d4e4;"></div><div style="position:absolute;left:1189.0px;top:758.9px;width:22.0px;height:22.0px;background:#fff;border:1px solid #c9c9c9;border-radius:5px;box-sizing:border-box;"></div><div style="position:absolute;left:1314.0px;top:758.9px;width:22.0px;height:22.0px;background:#fff;border:1px solid #c9c9c9;border-radius:5px;box-sizing:border-box;"></div><div style="position:absolute;left:1439.0px;top:758.9px;width:22.0px;height:22.0px;background:#fff;border:1px solid #c9c9c9;border-radius:5px;box-sizing:border-box;"></div><div style="position:absolute;left:1564.0px;top:758.9px;width:22.0px;height:22.0px;background:#fff;border:1px solid #c9c9c9;border-radius:5px;box-sizing:border-box;"></div><div style="position:absolute;left:1689.0px;top:758.9px;width:22.0px;height:22.0px;background:#fff;border:1px solid #c9c9c9;border-radius:5px;box-sizing:border-box;"></div><div style="position:absolute;left:1814.0px;top:758.9px;width:22.0px;height:22.0px;background:#fff;border:1px solid #c9c9c9;border-radius:5px;box-sizing:border-box;"></div><div style="position:absolute;left:1139px;top:832px;width:757px;height:2px;background:#d0d4e4;"></div><div style="position:absolute;left:1189.0px;top:801.4px;width:22.0px;height:22.0px;background:#fff;border:1px solid #c9c9c9;border-radius:5px;box-sizing:border-box;"></div><div style="position:absolute;left:1314.0px;top:801.4px;width:22.0px;height:22.0px;background:#fff;border:1px solid #c9c9c9;border-radius:5px;box-sizing:border-box;"></div><div style="position:absolute;left:1439.0px;top:801.4px;width:22.0px;height:22.0px;background:#fff;border:1px solid #c9c9c9;border-radius:5px;box-sizing:border-box;"></div><div style="position:absolute;left:1564.0px;top:801.4px;width:22.0px;height:22.0px;background:#fff;border:1px solid #c9c9c9;border-radius:5px;box-sizing:border-box;"></div><div style="position:absolute;left:1689.0px;top:801.4px;width:22.0px;height:22.0px;background:#fff;border:1px solid #c9c9c9;border-radius:5px;box-sizing:border-box;"></div><div style="position:absolute;left:1814.0px;top:801.4px;width:22.0px;height:22.0px;background:#fff;border:1px solid #c9c9c9;border-radius:5px;box-sizing:border-box;"></div><div style="position:absolute;left:1139px;top:874px;width:757px;height:2px;background:#d0d4e4;"></div><div style="position:absolute;left:1189.0px;top:843.4px;width:22.0px;height:22.0px;background:#fff;border:1px solid #c9c9c9;border-radius:5px;box-sizing:border-box;"></div><div style="position:absolute;left:1314.0px;top:843.4px;width:22.0px;height:22.0px;background:#fff;border:1px solid #c9c9c9;border-radius:5px;box-sizing:border-box;"></div><div style="position:absolute;left:1439.0px;top:843.4px;width:22.0px;height:22.0px;background:#fff;border:1px solid #c9c9c9;border-radius:5px;box-sizing:border-box;"></div><div style="position:absolute;left:1564.0px;top:843.4px;width:22.0px;height:22.0px;background:#fff;border:1px solid #c9c9c9;border-radius:5px;box-sizing:border-box;"></div><div style="position:absolute;left:1689.0px;top:843.4px;width:22.0px;height:22.0px;background:#fff;border:1px solid #c9c9c9;border-radius:5px;box-sizing:border-box;"></div><div style="position:absolute;left:1814.0px;top:843.4px;width:22.0px;height:22.0px;background:#fff;border:1px solid #c9c9c9;border-radius:5px;box-sizing:border-box;"></div><div style="position:absolute;left:636px;top:283px;width:1px;height:571px;background:#d9dcea;"></div><div style="position:absolute;left:699px;top:283px;width:1px;height:571px;background:#d9dcea;"></div><div style="position:absolute;left:949px;top:283px;width:1px;height:571px;background:#d9dcea;"></div><div style="position:absolute;left:1137px;top:283px;width:2px;height:571px;background:#c9c9c9;"></div><div style="position:absolute;left:1263px;top:283px;width:1px;height:571px;background:#d9dcea;"></div><div style="position:absolute;left:1388px;top:283px;width:1px;height:571px;background:#d9dcea;"></div><div style="position:absolute;left:1513px;top:283px;width:1px;height:571px;background:#d9dcea;"></div><div style="position:absolute;left:1638px;top:283px;width:1px;height:571px;background:#d9dcea;"></div><div style="position:absolute;left:1763px;top:283px;width:1px;height:571px;background:#d9dcea;"></div><div style="position:absolute;left:1888px;top:283px;width:1px;height:571px;background:#d9dcea;"></div></div><div style="position:absolute;left:636.4px;top:181.5px;width:1268.1999999999998px;height:101.5px;background:#f3f4f9;border-top:1px solid #d9dcea;box-sizing:border-box;"></div><div style="position:absolute;left:636.4px;top:283px;width:1268.1999999999998px;height:1px;background:#d9dcea;"></div><div style="position:absolute;left:636px;top:181.5px;width:1px;height:101.5px;background:#d9dcea;"></div><div style="position:absolute;left:699px;top:181.5px;width:1px;height:101.5px;background:#d9dcea;"></div><div style="position:absolute;left:949px;top:181.5px;width:1px;height:101.5px;background:#d9dcea;"></div><div style="position:absolute;left:1137px;top:181.5px;width:1px;height:101.5px;background:#d9dcea;"></div><div style="position:absolute;left:1138px;top:181.5px;width:1px;height:101.5px;background:#d9dcea;"></div><div style="position:absolute;left:1263px;top:181.5px;width:1px;height:101.5px;background:#d9dcea;"></div><div style="position:absolute;left:1388px;top:181.5px;width:1px;height:101.5px;background:#d9dcea;"></div><div style="position:absolute;left:1513px;top:181.5px;width:1px;height:101.5px;background:#d9dcea;"></div><div style="position:absolute;left:1638px;top:181.5px;width:1px;height:101.5px;background:#d9dcea;"></div><div style="position:absolute;left:1763px;top:222.6px;width:1px;height:60.400000000000006px;background:#d9dcea;"></div><div style="position:absolute;left:1888px;top:181.5px;width:1px;height:101.5px;background:#d9dcea;"></div><div style="position:absolute;left:1638.3px;top:222.6px;width:250.10000000000014px;height:1.0px;background:#d9dcea;"></div><div style="position:absolute;left:636.4px;width:60px;text-align:center;top:223.53px;font-size:16.5px;line-height:16.5px;font-weight:700;color:#1a1a1a;white-space:nowrap;letter-spacing:0px;">STT</div><div style="position:absolute;left:703.0px;width:240px;text-align:center;top:201.53px;font-size:16.5px;line-height:16.5px;font-weight:700;color:#1a1a1a;white-space:nowrap;letter-spacing:0px;">Họ và tên</div><div style="position:absolute;left:952.0px;width:180px;text-align:center;top:201.53px;font-size:16.5px;line-height:16.5px;font-weight:700;color:#1a1a1a;white-space:nowrap;letter-spacing:0px;">Ngày sinh</div><div style="position:absolute;left:707.7px;top:244.4px;width:236.29999999999995px;height:31.400000000000006px;background:#fff;border:1px solid #e3e3e3;border-radius:5px;box-sizing:border-box;"></div><div style="position:absolute;left:957.4px;top:244.4px;width:174.0000000000001px;height:31.400000000000006px;background:#fff;border:1px solid #e3e3e3;border-radius:5px;box-sizing:border-box;"></div><svg style="position:absolute;left:714.5px;top:254.5px;overflow:visible" width="13" height="13" viewBox="0 0 13 13"><path d="M1 1.5 H12 L7.6 6.8 V11.5 L5.4 10.2 V6.8 Z" fill="none" stroke="#6b6f7a" stroke-width="1.3" stroke-linejoin="round"/></svg><svg style="position:absolute;left:964px;top:254.5px;overflow:visible" width="13" height="13" viewBox="0 0 13 13"><path d="M1 1.5 H12 L7.6 6.8 V11.5 L5.4 10.2 V6.8 Z" fill="none" stroke="#6b6f7a" stroke-width="1.3" stroke-linejoin="round"/></svg><svg style="position:absolute;left:1100px;top:250px;overflow:visible" width="22" height="20" viewBox="0 0 22 20"><rect x="1.5" y="2.8" width="18.5" height="15.7" rx="2.5" fill="none" stroke="#07bc6c" stroke-width="1.8"/><line x1="1.5" y1="7.3" x2="20" y2="7.3" stroke="#07bc6c" stroke-width="1.8"/><line x1="6" y1="0.8" x2="6" y2="4" stroke="#07bc6c" stroke-width="1.8"/><line x1="15.5" y1="0.8" x2="15.5" y2="4" stroke="#07bc6c" stroke-width="1.8"/><g stroke="#07bc6c" stroke-width="1.6"><line x1="5" y1="11" x2="8" y2="11"/><line x1="9.7" y1="11" x2="12.7" y2="11"/><line x1="14.4" y1="11" x2="17.4" y2="11"/><line x1="5" y1="14.5" x2="8" y2="14.5"/><line x1="9.7" y1="14.5" x2="12.7" y2="14.5"/></g></svg><div style="position:absolute;left:1131.0px;width:120px;text-align:center;top:212.53px;font-size:16.5px;line-height:16.5px;font-weight:700;color:#1a1a1a;white-space:nowrap;letter-spacing:0px;">Sổ liên lạc</div><div style="position:absolute;left:1131.0px;width:120px;text-align:center;top:234.03px;font-size:16.5px;line-height:16.5px;font-weight:700;color:#1a1a1a;white-space:nowrap;letter-spacing:0px;">điện tử</div><svg style="position:absolute;left:1237.5px;top:230.75px;overflow:visible" width="11" height="5.5" viewBox="0 0 11 5.5"><path d="M1 1 L5.5 5.0 L10 1" fill="none" stroke="#8a8a8a" stroke-width="1.9" stroke-linecap="round" stroke-linejoin="round"/></svg><div style="position:absolute;left:1256.0px;width:120px;text-align:center;top:212.53px;font-size:16.5px;line-height:16.5px;font-weight:700;color:#1a1a1a;white-space:nowrap;letter-spacing:0px;">Sữa học</div><div style="position:absolute;left:1256.0px;width:120px;text-align:center;top:234.03px;font-size:16.5px;line-height:16.5px;font-weight:700;color:#1a1a1a;white-space:nowrap;letter-spacing:0px;">đường</div><svg style="position:absolute;left:1362.5px;top:230.75px;overflow:visible" width="11" height="5.5" viewBox="0 0 11 5.5"><path d="M1 1 L5.5 5.0 L10 1" fill="none" stroke="#8a8a8a" stroke-width="1.9" stroke-linecap="round" stroke-linejoin="round"/></svg><div style="position:absolute;left:1381.0px;width:120px;text-align:center;top:212.53px;font-size:16.5px;line-height:16.5px;font-weight:700;color:#1a1a1a;white-space:nowrap;letter-spacing:0px;">Tiền ăn</div><div style="position:absolute;left:1381.0px;width:120px;text-align:center;top:234.03px;font-size:16.5px;line-height:16.5px;font-weight:700;color:#1a1a1a;white-space:nowrap;letter-spacing:0px;">bán trú</div><svg style="position:absolute;left:1487.5px;top:230.75px;overflow:visible" width="11" height="5.5" viewBox="0 0 11 5.5"><path d="M1 1 L5.5 5.0 L10 1" fill="none" stroke="#8a8a8a" stroke-width="1.9" stroke-linecap="round" stroke-linejoin="round"/></svg><div style="position:absolute;left:1506.0px;width:120px;text-align:center;top:212.53px;font-size:16.5px;line-height:16.5px;font-weight:700;color:#1a1a1a;white-space:nowrap;letter-spacing:0px;">Bảo hiểm y</div><div style="position:absolute;left:1506.0px;width:120px;text-align:center;top:234.03px;font-size:16.5px;line-height:16.5px;font-weight:700;color:#1a1a1a;white-space:nowrap;letter-spacing:0px;">tế</div><svg style="position:absolute;left:1612.5px;top:230.75px;overflow:visible" width="11" height="5.5" viewBox="0 0 11 5.5"><path d="M1 1 L5.5 5.0 L10 1" fill="none" stroke="#8a8a8a" stroke-width="1.9" stroke-linecap="round" stroke-linejoin="round"/></svg><div style="position:absolute;left:1663.0px;width:200px;text-align:center;top:193.53px;font-size:16.5px;line-height:16.5px;font-weight:700;color:#1a1a1a;white-space:nowrap;letter-spacing:0px;">Đồng phục</div><div style="position:absolute;left:1631.5px;width:120px;text-align:center;top:232.53px;font-size:16.5px;line-height:16.5px;font-weight:400;color:#1a1a1a;white-space:nowrap;letter-spacing:0px;">Đồng phục</div><div style="position:absolute;left:1631.5px;width:120px;text-align:center;top:255.03px;font-size:16.5px;line-height:16.5px;font-weight:400;color:#1a1a1a;white-space:nowrap;letter-spacing:0px;">mùa đông</div><svg style="position:absolute;left:1737.5px;top:250.25px;overflow:visible" width="11" height="5.5" viewBox="0 0 11 5.5"><path d="M1 1 L5.5 5.0 L10 1" fill="none" stroke="#8a8a8a" stroke-width="1.9" stroke-linecap="round" stroke-linejoin="round"/></svg><div style="position:absolute;left:1756.5px;width:120px;text-align:center;top:232.53px;font-size:16.5px;line-height:16.5px;font-weight:400;color:#1a1a1a;white-space:nowrap;letter-spacing:0px;">Đồng phục</div><div style="position:absolute;left:1756.5px;width:120px;text-align:center;top:255.03px;font-size:16.5px;line-height:16.5px;font-weight:400;color:#1a1a1a;white-space:nowrap;letter-spacing:0px;">mùa hè</div><svg style="position:absolute;left:1862.5px;top:250.25px;overflow:visible" width="11" height="5.5" viewBox="0 0 11 5.5"><path d="M1 1 L5.5 5.0 L10 1" fill="none" stroke="#8a8a8a" stroke-width="1.9" stroke-linecap="round" stroke-linejoin="round"/></svg><div style="position:absolute;left:1896px;top:285px;width:8.599999999999909px;height:569px;background:#ececec;border-radius:4px;"></div><div style="position:absolute;left:1896px;top:285px;width:8.599999999999909px;height:349px;background:#a8a8a8;border-radius:4px;"></div><div style="position:absolute;left:636.4px;top:854px;width:1259.6px;height:11px;background:#fff;"></div><div style="position:absolute;left:637px;top:854px;width:499px;height:10px;background:#ececec;border-radius:5px;"></div><div style="position:absolute;left:1139px;top:854px;width:757px;height:10px;background:#ececec;border-radius:5px;"></div><div style="position:absolute;left:1139px;top:854px;width:441px;height:10px;background:linear-gradient(#a4a4a4,#b0b0b0);border-radius:5px;"></div><div style="position:absolute;left:636.4px;top:865px;width:1268.1999999999998px;height:37.39999999999998px;background:#dce2ee;"></div><div style="position:absolute;left:1137px;top:865px;width:1px;height:37.39999999999998px;background:#f4f6fa;"></div><div style="position:absolute;left:1263px;top:865px;width:1px;height:37.39999999999998px;background:#d3d9e6;"></div><div style="position:absolute;left:1388px;top:865px;width:1px;height:37.39999999999998px;background:#d3d9e6;"></div><div style="position:absolute;left:1513px;top:865px;width:1px;height:37.39999999999998px;background:#d3d9e6;"></div><div style="position:absolute;left:1638px;top:865px;width:1px;height:37.39999999999998px;background:#d3d9e6;"></div><div style="position:absolute;left:1763px;top:865px;width:1px;height:37.39999999999998px;background:#d3d9e6;"></div><div style="position:absolute;left:1888px;top:865px;width:1px;height:37.39999999999998px;background:#d3d9e6;"></div><div style="position:absolute;left:713px;top:876.53px;font-size:16.5px;line-height:16.5px;font-weight:400;color:#3a3a3a;white-space:nowrap;letter-spacing:0.076px;">Tổng: <b>22</b> kết quả</div><div style="position:absolute;left:1190.5px;width:60px;text-align:right;top:876.53px;font-size:16.5px;line-height:16.5px;font-weight:400;color:#2a2a2a;white-space:nowrap;letter-spacing:0px;">1</div><div style="position:absolute;left:1315.5px;width:60px;text-align:right;top:876.53px;font-size:16.5px;line-height:16.5px;font-weight:400;color:#2a2a2a;white-space:nowrap;letter-spacing:0px;">0</div><div style="position:absolute;left:1440.5px;width:60px;text-align:right;top:876.53px;font-size:16.5px;line-height:16.5px;font-weight:400;color:#2a2a2a;white-space:nowrap;letter-spacing:0px;">0</div><div style="position:absolute;left:1565.5px;width:60px;text-align:right;top:876.53px;font-size:16.5px;line-height:16.5px;font-weight:400;color:#2a2a2a;white-space:nowrap;letter-spacing:0px;">0</div><div style="position:absolute;left:1690.5px;width:60px;text-align:right;top:876.53px;font-size:16.5px;line-height:16.5px;font-weight:400;color:#2a2a2a;white-space:nowrap;letter-spacing:0px;">0</div><div style="position:absolute;left:1815.5px;width:60px;text-align:right;top:876.53px;font-size:16.5px;line-height:16.5px;font-weight:400;color:#2a2a2a;white-space:nowrap;letter-spacing:0px;">1</div><div style="position:absolute;left:636.2px;top:925.5px;width:21.0px;height:21.0px;border:2px solid #1e88e5;border-radius:50%;box-sizing:border-box;"></div><div style="position:absolute;left:645.8px;top:931px;width:1.8000000000000682px;height:2px;background:#1e88e5;"></div><div style="position:absolute;left:645.8px;top:934.5px;width:1.8000000000000682px;height:7.0px;background:#1e88e5;"></div><div style="position:absolute;left:667px;top:928.03px;font-size:16.5px;line-height:16.5px;font-weight:400;color:#222;white-space:nowrap;letter-spacing:0.235px;">Nhấn vào tiêu đề cột để tích chọn và bỏ tích chọn cho cả cột</div><div style="position:absolute;left:1785px;top:916.3px;width:119.70000000000005px;height:39.700000000000045px;background:#07bc6c;border-radius:6px;"></div><div style="position:absolute;left:1795.0px;width:100px;text-align:center;top:928.03px;font-size:16.5px;line-height:16.5px;font-weight:400;color:#fff;white-space:nowrap;letter-spacing:0px;">Lưu</div><div style="position:absolute;left:1900px;top:467px;width:20px;height:40px;background:#0b72e7;border-radius:6px 0 0 6px;box-shadow:-2px 0 6px rgba(0,0,0,0.08);"></div><svg style="position:absolute;left:1903px;top:480px;overflow:visible" width="12" height="14" viewBox="0 0 12 14"><path d="M8.3 2.8 L4.3 7 L8.3 11.2" fill="none" stroke="#fff" stroke-width="2.8" stroke-linecap="round" stroke-linejoin="round"/></svg></div></div></div>
<div style="position:absolute;left:1125px;top:447px;width:773px;height:52.5px;border:3px solid #e0161c;box-sizing:border-box;"></div>
<div style="position:absolute;left:1406px;top:1004px;width:774px;height:69.7px;border:3px solid #e0161c;box-sizing:border-box;"></div>
<svg style="position:absolute;left:0;top:0" width="2194" height="1529"><line x1="1601" y1="499" x2="1744" y2="990" stroke="#f24444" stroke-width="4"/><path d="M1748 1004.5 L1737 991.5 L1751.5 988 Z" fill="#f24444" stroke="#f24444" stroke-width="1.5" stroke-linejoin="round"/></svg>
</body></html>
